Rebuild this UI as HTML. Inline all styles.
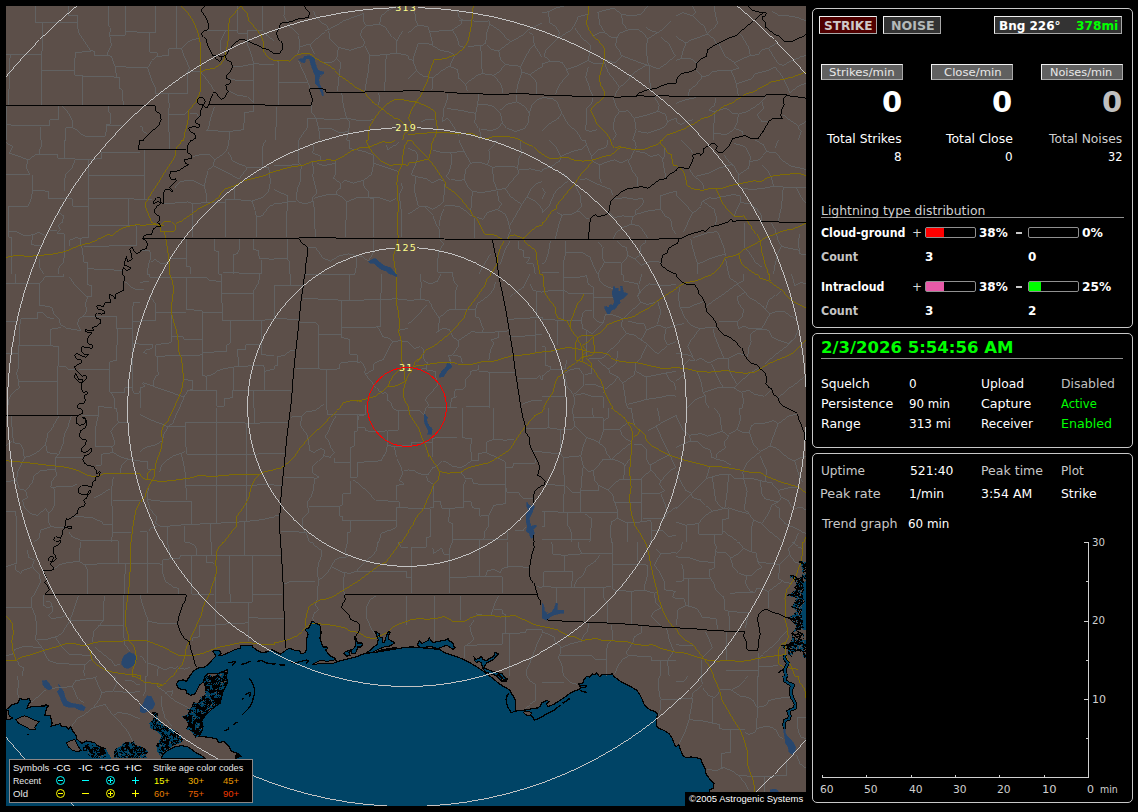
<!DOCTYPE html>
<html lang="en"><head><meta charset="utf-8"><title>Lightning Detector</title>
<style>
html,body{margin:0;padding:0;background:#000;}
body{width:1138px;height:812px;position:relative;overflow:hidden;font-family:"DejaVu Sans","Liberation Sans",sans-serif;}
.t{position:absolute;white-space:nowrap;line-height:normal;transform-origin:0 0;font-family:"DejaVu Sans","Liberation Sans",sans-serif;}
.box{position:absolute;box-sizing:border-box;border:1px solid #c8c8c8;border-radius:5px;}
.btn{position:absolute;box-sizing:border-box;border:1px solid;border-color:#f0f0f0 #a8a8a8 #a8a8a8 #f0f0f0;}
.bar{position:absolute;box-sizing:border-box;border:1px solid #909090;border-radius:2px;height:11px;width:51px;}
.bar i{position:absolute;left:0;top:0;height:9px;display:block;}
.hr{position:absolute;height:1px;background:#909090;}
#map{position:absolute;left:6px;top:6px;width:800px;height:800px;overflow:hidden;background:#5c4f49;}
#map svg{position:absolute;left:0;top:0;}
#graph{position:absolute;left:812px;top:453px;}
</style></head>
<body>
<div id="map"><svg width="800" height="800" viewBox="0 0 800 800" shape-rendering="crispEdges"><rect width="800" height="800" fill="#5c4f49"/><defs><pattern id="m1" width="40" height="40" patternUnits="userSpaceOnUse"><rect width="40" height="40" fill="#004466"/><path d="M0 0h4v1h-4zM6 0h10v1h-10zM19 0h10v1h-10zM33 0h7v1h-7zM0 1h4v1h-4zM6 1h7v1h-7zM19 1h3v1h-3zM24 1h5v1h-5zM33 1h7v1h-7zM0 2h4v1h-4zM7 2h4v1h-4zM12 2h1v1h-1zM14 2h1v1h-1zM19 2h2v1h-2zM26 2h3v1h-3zM30 2h5v1h-5zM36 2h4v1h-4zM0 3h1v1h-1zM3 3h1v1h-1zM5 3h1v1h-1zM7 3h2v1h-2zM11 3h2v1h-2zM16 3h1v1h-1zM18 3h3v1h-3zM23 3h1v1h-1zM26 3h3v1h-3zM30 3h3v1h-3zM36 3h4v1h-4zM0 4h2v1h-2zM3 4h19v1h-19zM23 4h11v1h-11zM35 4h5v1h-5zM2 5h8v1h-8zM11 5h10v1h-10zM26 5h7v1h-7zM34 5h5v1h-5zM3 6h5v1h-5zM11 6h1v1h-1zM13 6h6v1h-6zM20 6h1v1h-1zM28 6h12v1h-12zM4 7h1v1h-1zM11 7h5v1h-5zM28 7h11v1h-11zM9 8h1v1h-1zM11 8h1v1h-1zM13 8h4v1h-4zM27 8h1v1h-1zM30 8h9v1h-9zM4 9h1v1h-1zM6 9h3v1h-3zM16 9h4v1h-4zM22 9h4v1h-4zM28 9h3v1h-3zM33 9h6v1h-6zM4 10h4v1h-4zM11 10h1v1h-1zM13 10h1v1h-1zM16 10h6v1h-6zM23 10h7v1h-7zM32 10h2v1h-2zM35 10h5v1h-5zM5 11h3v1h-3zM12 11h1v1h-1zM14 11h1v1h-1zM17 11h4v1h-4zM25 11h1v1h-1zM27 11h1v1h-1zM29 11h1v1h-1zM36 11h3v1h-3zM0 12h3v1h-3zM5 12h10v1h-10zM17 12h3v1h-3zM21 12h2v1h-2zM24 12h1v1h-1zM26 12h4v1h-4zM31 12h1v1h-1zM33 12h1v1h-1zM36 12h3v1h-3zM0 13h4v1h-4zM6 13h11v1h-11zM20 13h2v1h-2zM25 13h4v1h-4zM30 13h1v1h-1zM32 13h1v1h-1zM34 13h1v1h-1zM36 13h4v1h-4zM0 14h3v1h-3zM4 14h1v1h-1zM8 14h8v1h-8zM20 14h4v1h-4zM25 14h4v1h-4zM30 14h7v1h-7zM38 14h1v1h-1zM0 15h5v1h-5zM6 15h8v1h-8zM15 15h1v1h-1zM17 15h2v1h-2zM20 15h4v1h-4zM25 15h3v1h-3zM29 15h1v1h-1zM31 15h4v1h-4zM39 15h1v1h-1zM0 16h6v1h-6zM7 16h1v1h-1zM9 16h5v1h-5zM16 16h8v1h-8zM26 16h4v1h-4zM31 16h3v1h-3zM37 16h2v1h-2zM0 17h6v1h-6zM8 17h6v1h-6zM15 17h8v1h-8zM27 17h1v1h-1zM31 17h1v1h-1zM38 17h2v1h-2zM0 18h2v1h-2zM3 18h2v1h-2zM7 18h1v1h-1zM9 18h1v1h-1zM11 18h2v1h-2zM14 18h1v1h-1zM17 18h1v1h-1zM19 18h3v1h-3zM26 18h7v1h-7zM34 18h1v1h-1zM0 19h1v1h-1zM2 19h2v1h-2zM6 19h1v1h-1zM9 19h3v1h-3zM18 19h1v1h-1zM20 19h1v1h-1zM26 19h1v1h-1zM28 19h1v1h-1zM30 19h4v1h-4zM38 19h2v1h-2zM0 20h2v1h-2zM3 20h1v1h-1zM6 20h2v1h-2zM10 20h3v1h-3zM17 20h1v1h-1zM21 20h1v1h-1zM24 20h11v1h-11zM37 20h1v1h-1zM39 20h1v1h-1zM0 21h1v1h-1zM2 21h1v1h-1zM9 21h5v1h-5zM15 21h2v1h-2zM20 21h2v1h-2zM23 21h1v1h-1zM25 21h1v1h-1zM30 21h10v1h-10zM0 22h1v1h-1zM4 22h2v1h-2zM7 22h1v1h-1zM13 22h4v1h-4zM18 22h1v1h-1zM23 22h1v1h-1zM29 22h11v1h-11zM2 23h2v1h-2zM10 23h2v1h-2zM13 23h3v1h-3zM19 23h1v1h-1zM22 23h1v1h-1zM24 23h1v1h-1zM30 23h1v1h-1zM33 23h7v1h-7zM0 24h3v1h-3zM5 24h1v1h-1zM7 24h4v1h-4zM13 24h8v1h-8zM22 24h5v1h-5zM28 24h1v1h-1zM30 24h1v1h-1zM33 24h1v1h-1zM36 24h3v1h-3zM0 25h2v1h-2zM7 25h4v1h-4zM13 25h12v1h-12zM26 25h1v1h-1zM30 25h1v1h-1zM34 25h1v1h-1zM37 25h3v1h-3zM0 26h2v1h-2zM4 26h2v1h-2zM7 26h4v1h-4zM13 26h12v1h-12zM28 26h1v1h-1zM30 26h1v1h-1zM32 26h3v1h-3zM36 26h1v1h-1zM0 27h1v1h-1zM2 27h1v1h-1zM8 27h3v1h-3zM18 27h5v1h-5zM29 27h6v1h-6zM38 27h2v1h-2zM0 28h2v1h-2zM3 28h1v1h-1zM8 28h4v1h-4zM18 28h3v1h-3zM22 28h2v1h-2zM30 28h10v1h-10zM3 29h1v1h-1zM5 29h1v1h-1zM8 29h1v1h-1zM10 29h3v1h-3zM18 29h1v1h-1zM20 29h1v1h-1zM23 29h4v1h-4zM30 29h10v1h-10zM1 30h3v1h-3zM5 30h1v1h-1zM7 30h7v1h-7zM17 30h4v1h-4zM22 30h4v1h-4zM32 30h8v1h-8zM0 31h1v1h-1zM2 31h9v1h-9zM12 31h3v1h-3zM17 31h9v1h-9zM27 31h2v1h-2zM31 31h1v1h-1zM34 31h5v1h-5zM1 32h9v1h-9zM11 32h1v1h-1zM14 32h3v1h-3zM18 32h8v1h-8zM30 32h1v1h-1zM32 32h1v1h-1zM34 32h6v1h-6zM3 33h6v1h-6zM10 33h2v1h-2zM14 33h1v1h-1zM16 33h3v1h-3zM20 33h6v1h-6zM27 33h1v1h-1zM29 33h11v1h-11zM2 34h1v1h-1zM5 34h6v1h-6zM12 34h3v1h-3zM16 34h6v1h-6zM23 34h3v1h-3zM28 34h9v1h-9zM38 34h2v1h-2zM0 35h1v1h-1zM5 35h8v1h-8zM14 35h4v1h-4zM23 35h3v1h-3zM27 35h9v1h-9zM0 36h10v1h-10zM11 36h1v1h-1zM13 36h1v1h-1zM17 36h1v1h-1zM19 36h6v1h-6zM27 36h3v1h-3zM31 36h5v1h-5zM39 36h1v1h-1zM0 37h2v1h-2zM4 37h1v1h-1zM6 37h2v1h-2zM9 37h1v1h-1zM11 37h1v1h-1zM13 37h2v1h-2zM18 37h8v1h-8zM27 37h3v1h-3zM34 37h6v1h-6zM0 38h1v1h-1zM2 38h5v1h-5zM8 38h1v1h-1zM10 38h1v1h-1zM12 38h2v1h-2zM18 38h2v1h-2zM22 38h7v1h-7zM30 38h1v1h-1zM34 38h6v1h-6zM6 39h8v1h-8zM15 39h1v1h-1zM17 39h4v1h-4zM22 39h7v1h-7zM34 39h6v1h-6z" fill="#000"/><path d="M31 1h1v1h-1zM35 2h1v1h-1zM10 3h1v1h-1zM21 5h1v1h-1zM9 6h1v1h-1zM12 6h1v1h-1zM24 6h1v1h-1zM16 7h1v1h-1zM25 7h1v1h-1zM39 7h1v1h-1zM10 8h1v1h-1zM0 9h1v1h-1zM3 9h1v1h-1zM21 9h1v1h-1zM22 10h1v1h-1zM35 11h1v1h-1zM30 12h1v1h-1zM34 12h1v1h-1zM5 14h1v1h-1zM37 14h1v1h-1zM30 15h1v1h-1zM36 17h1v1h-1zM2 18h1v1h-1zM5 18h1v1h-1zM8 18h1v1h-1zM5 19h1v1h-1zM24 19h1v1h-1zM20 20h1v1h-1zM2 22h1v1h-1zM8 22h1v1h-1zM17 22h1v1h-1zM4 23h1v1h-1zM20 23h1v1h-1zM3 24h1v1h-1zM4 25h1v1h-1zM11 25h1v1h-1zM35 25h1v1h-1zM26 26h1v1h-1zM36 27h1v1h-1zM14 28h2v1h-2zM2 29h1v1h-1zM14 29h1v1h-1zM6 30h1v1h-1zM27 30h1v1h-1zM13 32h1v1h-1zM29 32h1v1h-1zM3 35h1v1h-1zM18 35h2v1h-2zM15 36h2v1h-2zM10 37h1v1h-1zM15 38h1v1h-1zM32 38h1v1h-1z" fill="#5c4f49"/></pattern><pattern id="m2" width="40" height="40" patternUnits="userSpaceOnUse"><rect width="40" height="40" fill="#004466"/><path d="M0 0h3v1h-3zM5 0h4v1h-4zM11 0h1v1h-1zM13 0h1v1h-1zM15 0h2v1h-2zM27 0h1v1h-1zM29 0h1v1h-1zM31 0h1v1h-1zM34 0h1v1h-1zM36 0h1v1h-1zM38 0h2v1h-2zM1 1h2v1h-2zM7 1h1v1h-1zM13 1h4v1h-4zM20 1h1v1h-1zM22 1h1v1h-1zM27 1h1v1h-1zM30 1h1v1h-1zM32 1h1v1h-1zM34 1h1v1h-1zM37 1h1v1h-1zM39 1h1v1h-1zM0 2h3v1h-3zM6 2h2v1h-2zM9 2h1v1h-1zM13 2h3v1h-3zM19 2h1v1h-1zM21 2h4v1h-4zM27 2h1v1h-1zM30 2h3v1h-3zM35 2h5v1h-5zM0 3h2v1h-2zM5 3h1v1h-1zM9 3h2v1h-2zM13 3h1v1h-1zM15 3h5v1h-5zM21 3h4v1h-4zM26 3h10v1h-10zM37 3h1v1h-1zM39 3h1v1h-1zM0 4h3v1h-3zM10 4h2v1h-2zM13 4h1v1h-1zM17 4h1v1h-1zM20 4h1v1h-1zM23 4h2v1h-2zM26 4h3v1h-3zM30 4h5v1h-5zM38 4h1v1h-1zM1 5h1v1h-1zM4 5h1v1h-1zM9 5h2v1h-2zM12 5h3v1h-3zM20 5h1v1h-1zM22 5h3v1h-3zM26 5h2v1h-2zM33 5h3v1h-3zM5 6h1v1h-1zM8 6h7v1h-7zM16 6h2v1h-2zM20 6h2v1h-2zM23 6h3v1h-3zM28 6h3v1h-3zM36 6h2v1h-2zM4 7h3v1h-3zM8 7h3v1h-3zM12 7h3v1h-3zM18 7h1v1h-1zM20 7h1v1h-1zM24 7h3v1h-3zM30 7h2v1h-2zM35 7h3v1h-3zM0 8h1v1h-1zM4 8h12v1h-12zM17 8h2v1h-2zM21 8h3v1h-3zM25 8h1v1h-1zM31 8h1v1h-1zM36 8h3v1h-3zM1 9h1v1h-1zM3 9h2v1h-2zM6 9h4v1h-4zM11 9h7v1h-7zM20 9h1v1h-1zM31 9h2v1h-2zM36 9h1v1h-1zM38 9h2v1h-2zM0 10h2v1h-2zM7 10h3v1h-3zM11 10h2v1h-2zM15 10h2v1h-2zM19 10h2v1h-2zM25 10h5v1h-5zM32 10h2v1h-2zM37 10h3v1h-3zM0 11h3v1h-3zM7 11h1v1h-1zM9 11h1v1h-1zM11 11h1v1h-1zM16 11h3v1h-3zM22 11h3v1h-3zM26 11h2v1h-2zM29 11h3v1h-3zM33 11h1v1h-1zM35 11h1v1h-1zM37 11h2v1h-2zM0 12h1v1h-1zM4 12h1v1h-1zM7 12h1v1h-1zM11 12h3v1h-3zM15 12h3v1h-3zM26 12h8v1h-8zM36 12h3v1h-3zM0 13h4v1h-4zM12 13h1v1h-1zM14 13h4v1h-4zM21 13h1v1h-1zM23 13h1v1h-1zM25 13h1v1h-1zM27 13h10v1h-10zM38 13h1v1h-1zM0 14h4v1h-4zM7 14h6v1h-6zM15 14h1v1h-1zM17 14h1v1h-1zM20 14h1v1h-1zM22 14h1v1h-1zM24 14h1v1h-1zM29 14h4v1h-4zM35 14h2v1h-2zM0 15h3v1h-3zM5 15h1v1h-1zM7 15h3v1h-3zM11 15h1v1h-1zM15 15h3v1h-3zM19 15h1v1h-1zM23 15h4v1h-4zM28 15h1v1h-1zM31 15h2v1h-2zM34 15h6v1h-6zM0 16h3v1h-3zM5 16h2v1h-2zM9 16h4v1h-4zM17 16h1v1h-1zM19 16h1v1h-1zM22 16h2v1h-2zM26 16h4v1h-4zM31 16h1v1h-1zM34 16h1v1h-1zM36 16h4v1h-4zM0 17h3v1h-3zM5 17h1v1h-1zM7 17h1v1h-1zM10 17h1v1h-1zM15 17h1v1h-1zM19 17h1v1h-1zM22 17h1v1h-1zM24 17h1v1h-1zM26 17h1v1h-1zM28 17h1v1h-1zM31 17h5v1h-5zM38 17h2v1h-2zM0 18h3v1h-3zM6 18h4v1h-4zM11 18h1v1h-1zM13 18h1v1h-1zM20 18h1v1h-1zM25 18h8v1h-8zM35 18h1v1h-1zM37 18h1v1h-1zM0 19h2v1h-2zM6 19h1v1h-1zM8 19h3v1h-3zM13 19h1v1h-1zM15 19h1v1h-1zM21 19h1v1h-1zM26 19h1v1h-1zM30 19h3v1h-3zM39 19h1v1h-1zM0 20h3v1h-3zM9 20h2v1h-2zM13 20h1v1h-1zM15 20h1v1h-1zM17 20h2v1h-2zM21 20h4v1h-4zM27 20h3v1h-3zM31 20h2v1h-2zM36 20h1v1h-1zM39 20h1v1h-1zM0 21h4v1h-4zM7 21h10v1h-10zM25 21h1v1h-1zM27 21h4v1h-4zM35 21h5v1h-5zM0 22h4v1h-4zM6 22h1v1h-1zM8 22h5v1h-5zM14 22h2v1h-2zM17 22h3v1h-3zM29 22h2v1h-2zM35 22h3v1h-3zM0 23h1v1h-1zM2 23h8v1h-8zM11 23h1v1h-1zM13 23h1v1h-1zM15 23h1v1h-1zM17 23h3v1h-3zM21 23h1v1h-1zM27 23h3v1h-3zM33 23h1v1h-1zM35 23h3v1h-3zM0 24h1v1h-1zM3 24h4v1h-4zM8 24h3v1h-3zM13 24h1v1h-1zM15 24h1v1h-1zM17 24h3v1h-3zM23 24h1v1h-1zM30 24h1v1h-1zM34 24h1v1h-1zM36 24h4v1h-4zM3 25h4v1h-4zM8 25h1v1h-1zM10 25h9v1h-9zM27 25h4v1h-4zM37 25h1v1h-1zM4 26h3v1h-3zM10 26h1v1h-1zM15 26h1v1h-1zM18 26h6v1h-6zM26 26h4v1h-4zM31 26h1v1h-1zM33 26h3v1h-3zM38 26h1v1h-1zM0 27h1v1h-1zM5 27h4v1h-4zM11 27h5v1h-5zM17 27h7v1h-7zM26 27h3v1h-3zM30 27h2v1h-2zM35 27h2v1h-2zM39 27h1v1h-1zM0 28h1v1h-1zM2 28h1v1h-1zM7 28h2v1h-2zM11 28h4v1h-4zM16 28h1v1h-1zM20 28h3v1h-3zM25 28h3v1h-3zM29 28h3v1h-3zM0 29h2v1h-2zM3 29h1v1h-1zM5 29h3v1h-3zM10 29h1v1h-1zM12 29h2v1h-2zM25 29h5v1h-5zM31 29h1v1h-1zM35 29h1v1h-1zM39 29h1v1h-1zM2 30h6v1h-6zM9 30h1v1h-1zM11 30h1v1h-1zM18 30h2v1h-2zM27 30h3v1h-3zM31 30h2v1h-2zM36 30h3v1h-3zM2 31h3v1h-3zM6 31h1v1h-1zM8 31h1v1h-1zM10 31h2v1h-2zM13 31h1v1h-1zM17 31h1v1h-1zM23 31h1v1h-1zM33 31h1v1h-1zM35 31h1v1h-1zM38 31h2v1h-2zM3 32h1v1h-1zM5 32h5v1h-5zM11 32h1v1h-1zM13 32h2v1h-2zM16 32h3v1h-3zM27 32h3v1h-3zM31 32h2v1h-2zM37 32h2v1h-2zM3 33h7v1h-7zM12 33h1v1h-1zM14 33h1v1h-1zM16 33h4v1h-4zM22 33h3v1h-3zM26 33h2v1h-2zM29 33h1v1h-1zM35 33h1v1h-1zM38 33h2v1h-2zM0 34h1v1h-1zM3 34h1v1h-1zM5 34h1v1h-1zM7 34h8v1h-8zM16 34h2v1h-2zM19 34h1v1h-1zM22 34h1v1h-1zM24 34h2v1h-2zM27 34h1v1h-1zM29 34h3v1h-3zM33 34h1v1h-1zM37 34h1v1h-1zM39 34h1v1h-1zM0 35h1v1h-1zM5 35h1v1h-1zM9 35h4v1h-4zM17 35h1v1h-1zM19 35h1v1h-1zM21 35h2v1h-2zM25 35h2v1h-2zM29 35h2v1h-2zM34 35h1v1h-1zM37 35h3v1h-3zM0 36h1v1h-1zM2 36h1v1h-1zM6 36h5v1h-5zM12 36h1v1h-1zM19 36h1v1h-1zM22 36h2v1h-2zM26 36h1v1h-1zM28 36h2v1h-2zM33 36h1v1h-1zM38 36h2v1h-2zM7 37h6v1h-6zM19 37h3v1h-3zM27 37h1v1h-1zM29 37h1v1h-1zM35 37h1v1h-1zM3 38h1v1h-1zM7 38h6v1h-6zM19 38h4v1h-4zM27 38h3v1h-3zM31 38h1v1h-1zM38 38h2v1h-2zM0 39h4v1h-4zM9 39h1v1h-1zM11 39h2v1h-2zM15 39h1v1h-1zM18 39h1v1h-1zM20 39h1v1h-1zM25 39h1v1h-1zM28 39h1v1h-1zM30 39h5v1h-5zM39 39h1v1h-1z" fill="#000"/><path d="M4 0h1v1h-1zM10 0h1v1h-1zM21 0h1v1h-1zM6 1h1v1h-1zM23 1h1v1h-1zM7 3h2v1h-2zM25 5h1v1h-1zM22 6h1v1h-1zM19 7h1v1h-1zM23 7h1v1h-1zM32 8h1v1h-1zM28 9h1v1h-1zM10 10h1v1h-1zM17 10h1v1h-1zM12 11h1v1h-1zM1 12h1v1h-1zM18 13h1v1h-1zM22 13h1v1h-1zM39 13h1v1h-1zM14 14h1v1h-1zM37 14h1v1h-1zM21 15h1v1h-1zM29 15h1v1h-1zM4 16h1v1h-1zM32 16h1v1h-1zM30 17h1v1h-1zM20 19h1v1h-1zM34 19h2v1h-2zM24 21h1v1h-1zM39 22h1v1h-1zM28 24h1v1h-1zM2 26h1v1h-1zM25 26h1v1h-1zM17 28h1v1h-1zM34 28h1v1h-1zM2 29h1v1h-1zM16 29h1v1h-1zM0 30h1v1h-1zM13 30h1v1h-1zM21 30h1v1h-1zM14 31h1v1h-1zM30 31h1v1h-1zM33 32h1v1h-1zM1 33h1v1h-1zM32 34h1v1h-1zM38 34h1v1h-1zM18 35h1v1h-1zM24 35h1v1h-1zM35 35h1v1h-1zM31 36h1v1h-1zM3 37h1v1h-1zM37 37h1v1h-1zM13 38h1v1h-1zM34 38h1v1h-1zM16 39h1v1h-1zM37 39h1v1h-1z" fill="#5c4f49"/></pattern><pattern id="m3" width="40" height="40" patternUnits="userSpaceOnUse"><rect width="40" height="40" fill="#004466"/><path d="M0 0h1v1h-1zM2 0h1v1h-1zM4 0h1v1h-1zM6 0h1v1h-1zM13 0h1v1h-1zM15 0h2v1h-2zM19 0h1v1h-1zM21 0h4v1h-4zM30 0h1v1h-1zM36 0h2v1h-2zM39 0h1v1h-1zM1 1h5v1h-5zM12 1h1v1h-1zM14 1h4v1h-4zM21 1h2v1h-2zM24 1h2v1h-2zM29 1h1v1h-1zM37 1h2v1h-2zM2 2h4v1h-4zM12 2h4v1h-4zM17 2h2v1h-2zM23 2h1v1h-1zM38 2h2v1h-2zM1 3h1v1h-1zM3 3h3v1h-3zM14 3h2v1h-2zM17 3h1v1h-1zM23 3h2v1h-2zM27 3h2v1h-2zM31 3h2v1h-2zM37 3h2v1h-2zM2 4h1v1h-1zM8 4h2v1h-2zM11 4h1v1h-1zM14 4h1v1h-1zM16 4h3v1h-3zM24 4h1v1h-1zM28 4h2v1h-2zM31 4h1v1h-1zM33 4h1v1h-1zM39 4h1v1h-1zM0 5h1v1h-1zM9 5h1v1h-1zM11 5h1v1h-1zM13 5h1v1h-1zM17 5h6v1h-6zM25 5h3v1h-3zM29 5h4v1h-4zM34 5h1v1h-1zM37 5h3v1h-3zM1 6h1v1h-1zM3 6h1v1h-1zM8 6h1v1h-1zM10 6h5v1h-5zM17 6h2v1h-2zM20 6h2v1h-2zM23 6h1v1h-1zM25 6h2v1h-2zM28 6h1v1h-1zM32 6h1v1h-1zM34 6h1v1h-1zM37 6h1v1h-1zM2 7h4v1h-4zM8 7h1v1h-1zM10 7h1v1h-1zM13 7h3v1h-3zM20 7h3v1h-3zM26 7h1v1h-1zM28 7h2v1h-2zM33 7h2v1h-2zM3 8h1v1h-1zM6 8h1v1h-1zM9 8h1v1h-1zM12 8h2v1h-2zM16 8h3v1h-3zM20 8h1v1h-1zM29 8h1v1h-1zM33 8h1v1h-1zM3 9h1v1h-1zM5 9h1v1h-1zM8 9h1v1h-1zM10 9h1v1h-1zM12 9h1v1h-1zM15 9h2v1h-2zM18 9h1v1h-1zM20 9h2v1h-2zM34 9h2v1h-2zM39 9h1v1h-1zM1 10h1v1h-1zM4 10h1v1h-1zM6 10h1v1h-1zM9 10h3v1h-3zM13 10h1v1h-1zM15 10h2v1h-2zM20 10h2v1h-2zM25 10h1v1h-1zM30 10h3v1h-3zM35 10h1v1h-1zM39 10h1v1h-1zM4 11h2v1h-2zM7 11h1v1h-1zM10 11h2v1h-2zM14 11h1v1h-1zM16 11h1v1h-1zM18 11h2v1h-2zM21 11h1v1h-1zM23 11h1v1h-1zM27 11h1v1h-1zM29 11h8v1h-8zM38 11h1v1h-1zM3 12h1v1h-1zM5 12h2v1h-2zM8 12h4v1h-4zM13 12h2v1h-2zM16 12h2v1h-2zM19 12h1v1h-1zM23 12h1v1h-1zM27 12h2v1h-2zM30 12h1v1h-1zM32 12h2v1h-2zM36 12h4v1h-4zM0 13h1v1h-1zM4 13h5v1h-5zM11 13h1v1h-1zM13 13h3v1h-3zM17 13h6v1h-6zM24 13h1v1h-1zM26 13h7v1h-7zM34 13h1v1h-1zM37 13h1v1h-1zM8 14h3v1h-3zM13 14h2v1h-2zM20 14h3v1h-3zM24 14h2v1h-2zM27 14h1v1h-1zM29 14h1v1h-1zM32 14h6v1h-6zM39 14h1v1h-1zM0 15h1v1h-1zM2 15h1v1h-1zM7 15h1v1h-1zM9 15h3v1h-3zM18 15h9v1h-9zM29 15h1v1h-1zM31 15h3v1h-3zM35 15h3v1h-3zM39 15h1v1h-1zM0 16h1v1h-1zM3 16h2v1h-2zM7 16h3v1h-3zM11 16h1v1h-1zM16 16h1v1h-1zM18 16h2v1h-2zM26 16h4v1h-4zM32 16h1v1h-1zM36 16h2v1h-2zM0 17h1v1h-1zM2 17h3v1h-3zM9 17h3v1h-3zM17 17h2v1h-2zM25 17h1v1h-1zM27 17h6v1h-6zM2 18h1v1h-1zM4 18h1v1h-1zM6 18h1v1h-1zM8 18h2v1h-2zM13 18h1v1h-1zM17 18h3v1h-3zM26 18h3v1h-3zM31 18h1v1h-1zM33 18h4v1h-4zM2 19h2v1h-2zM13 19h1v1h-1zM17 19h2v1h-2zM22 19h1v1h-1zM24 19h5v1h-5zM30 19h3v1h-3zM34 19h1v1h-1zM38 19h1v1h-1zM0 20h1v1h-1zM8 20h1v1h-1zM10 20h4v1h-4zM16 20h2v1h-2zM26 20h2v1h-2zM29 20h4v1h-4zM34 20h1v1h-1zM36 20h1v1h-1zM38 20h1v1h-1zM0 21h4v1h-4zM10 21h1v1h-1zM13 21h1v1h-1zM16 21h1v1h-1zM22 21h1v1h-1zM27 21h2v1h-2zM31 21h1v1h-1zM33 21h7v1h-7zM0 22h3v1h-3zM7 22h2v1h-2zM12 22h1v1h-1zM14 22h1v1h-1zM16 22h1v1h-1zM22 22h1v1h-1zM24 22h2v1h-2zM29 22h6v1h-6zM38 22h1v1h-1zM1 23h3v1h-3zM6 23h1v1h-1zM8 23h1v1h-1zM10 23h8v1h-8zM22 23h1v1h-1zM24 23h1v1h-1zM30 23h5v1h-5zM37 23h2v1h-2zM1 24h4v1h-4zM7 24h2v1h-2zM13 24h4v1h-4zM19 24h3v1h-3zM24 24h4v1h-4zM30 24h2v1h-2zM36 24h2v1h-2zM2 25h1v1h-1zM4 25h1v1h-1zM6 25h1v1h-1zM22 25h1v1h-1zM24 25h4v1h-4zM29 25h3v1h-3zM33 25h1v1h-1zM36 25h1v1h-1zM38 25h1v1h-1zM0 26h1v1h-1zM2 26h2v1h-2zM11 26h1v1h-1zM13 26h1v1h-1zM15 26h1v1h-1zM17 26h1v1h-1zM21 26h2v1h-2zM25 26h2v1h-2zM28 26h5v1h-5zM35 26h5v1h-5zM1 27h2v1h-2zM4 27h5v1h-5zM10 27h1v1h-1zM14 27h5v1h-5zM20 27h4v1h-4zM27 27h4v1h-4zM32 27h2v1h-2zM39 27h1v1h-1zM1 28h2v1h-2zM4 28h2v1h-2zM7 28h3v1h-3zM13 28h1v1h-1zM16 28h3v1h-3zM25 28h3v1h-3zM29 28h5v1h-5zM35 28h1v1h-1zM38 28h1v1h-1zM2 29h1v1h-1zM5 29h1v1h-1zM8 29h1v1h-1zM14 29h3v1h-3zM18 29h2v1h-2zM22 29h1v1h-1zM26 29h1v1h-1zM28 29h2v1h-2zM36 29h3v1h-3zM1 30h1v1h-1zM5 30h5v1h-5zM16 30h2v1h-2zM24 30h1v1h-1zM28 30h1v1h-1zM32 30h1v1h-1zM36 30h1v1h-1zM38 30h1v1h-1zM0 31h3v1h-3zM5 31h1v1h-1zM7 31h1v1h-1zM9 31h3v1h-3zM14 31h1v1h-1zM18 31h2v1h-2zM23 31h2v1h-2zM26 31h5v1h-5zM33 31h4v1h-4zM1 32h2v1h-2zM5 32h2v1h-2zM8 32h3v1h-3zM14 32h1v1h-1zM17 32h6v1h-6zM24 32h1v1h-1zM28 32h1v1h-1zM36 32h2v1h-2zM39 32h1v1h-1zM2 33h4v1h-4zM10 33h3v1h-3zM17 33h3v1h-3zM22 33h3v1h-3zM28 33h1v1h-1zM32 33h4v1h-4zM37 33h1v1h-1zM2 34h4v1h-4zM7 34h4v1h-4zM12 34h1v1h-1zM15 34h2v1h-2zM23 34h1v1h-1zM25 34h1v1h-1zM28 34h2v1h-2zM31 34h2v1h-2zM35 34h1v1h-1zM1 35h1v1h-1zM4 35h2v1h-2zM7 35h2v1h-2zM15 35h1v1h-1zM22 35h3v1h-3zM28 35h1v1h-1zM30 35h4v1h-4zM38 35h2v1h-2zM4 36h5v1h-5zM17 36h2v1h-2zM21 36h12v1h-12zM34 36h3v1h-3zM1 37h2v1h-2zM4 37h1v1h-1zM8 37h1v1h-1zM11 37h2v1h-2zM14 37h1v1h-1zM17 37h11v1h-11zM29 37h3v1h-3zM34 37h2v1h-2zM39 37h1v1h-1zM0 38h2v1h-2zM4 38h2v1h-2zM8 38h2v1h-2zM14 38h1v1h-1zM17 38h1v1h-1zM19 38h9v1h-9zM31 38h4v1h-4zM39 38h1v1h-1zM1 39h3v1h-3zM5 39h1v1h-1zM8 39h1v1h-1zM11 39h1v1h-1zM15 39h1v1h-1zM17 39h1v1h-1zM19 39h1v1h-1zM21 39h3v1h-3zM26 39h1v1h-1zM29 39h2v1h-2zM37 39h3v1h-3z" fill="#000"/><path d="M10 0h2v1h-2zM18 0h1v1h-1zM20 0h1v1h-1zM26 0h1v1h-1zM33 0h2v1h-2zM8 1h1v1h-1zM13 1h1v1h-1zM20 1h1v1h-1zM30 1h1v1h-1zM33 1h1v1h-1zM35 1h1v1h-1zM39 1h1v1h-1zM1 2h1v1h-1zM10 2h2v1h-2zM16 2h1v1h-1zM20 2h1v1h-1zM22 2h1v1h-1zM24 2h2v1h-2zM30 2h1v1h-1zM33 2h1v1h-1zM2 3h1v1h-1zM6 3h2v1h-2zM9 3h1v1h-1zM18 3h2v1h-2zM21 3h1v1h-1zM26 3h1v1h-1zM30 3h1v1h-1zM34 3h1v1h-1zM36 3h1v1h-1zM39 3h1v1h-1zM1 4h1v1h-1zM6 4h2v1h-2zM13 4h1v1h-1zM15 4h1v1h-1zM34 4h2v1h-2zM38 4h1v1h-1zM1 5h3v1h-3zM5 5h2v1h-2zM8 5h1v1h-1zM10 5h1v1h-1zM12 5h1v1h-1zM14 5h2v1h-2zM24 5h1v1h-1zM33 5h1v1h-1zM35 5h1v1h-1zM4 6h1v1h-1zM9 6h1v1h-1zM19 6h1v1h-1zM22 6h1v1h-1zM24 6h1v1h-1zM27 6h1v1h-1zM33 6h1v1h-1zM36 6h1v1h-1zM38 6h2v1h-2zM6 7h1v1h-1zM9 7h1v1h-1zM17 7h1v1h-1zM23 7h1v1h-1zM27 7h1v1h-1zM30 7h1v1h-1zM32 7h1v1h-1zM36 7h2v1h-2zM39 7h1v1h-1zM1 8h1v1h-1zM8 8h1v1h-1zM14 8h1v1h-1zM23 8h1v1h-1zM25 8h1v1h-1zM27 8h1v1h-1zM32 8h1v1h-1zM37 8h2v1h-2zM1 9h1v1h-1zM6 9h1v1h-1zM11 9h1v1h-1zM13 9h1v1h-1zM22 9h1v1h-1zM25 9h1v1h-1zM3 10h1v1h-1zM5 10h1v1h-1zM7 10h1v1h-1zM17 10h2v1h-2zM33 10h1v1h-1zM2 11h1v1h-1zM25 11h1v1h-1zM28 11h1v1h-1zM37 11h1v1h-1zM1 12h1v1h-1zM21 12h1v1h-1zM24 12h3v1h-3zM31 12h1v1h-1zM35 12h1v1h-1zM16 13h1v1h-1zM23 13h1v1h-1zM33 13h1v1h-1zM36 13h1v1h-1zM38 13h1v1h-1zM1 14h1v1h-1zM11 14h1v1h-1zM17 14h1v1h-1zM19 14h1v1h-1zM23 14h1v1h-1zM26 14h1v1h-1zM28 14h1v1h-1zM30 14h1v1h-1zM6 15h1v1h-1zM13 15h1v1h-1zM16 15h2v1h-2zM28 15h1v1h-1zM30 15h1v1h-1zM2 16h1v1h-1zM5 16h1v1h-1zM10 16h1v1h-1zM14 16h1v1h-1zM17 16h1v1h-1zM20 16h4v1h-4zM31 16h1v1h-1zM1 17h1v1h-1zM8 17h1v1h-1zM14 17h1v1h-1zM22 17h1v1h-1zM34 17h1v1h-1zM38 17h1v1h-1zM5 18h1v1h-1zM7 18h1v1h-1zM10 18h1v1h-1zM12 18h1v1h-1zM14 18h1v1h-1zM20 18h1v1h-1zM24 18h1v1h-1zM5 19h2v1h-2zM9 19h1v1h-1zM14 19h1v1h-1zM16 19h1v1h-1zM29 19h1v1h-1zM35 19h1v1h-1zM3 20h1v1h-1zM23 20h3v1h-3zM28 20h1v1h-1zM4 21h3v1h-3zM15 21h1v1h-1zM18 21h2v1h-2zM21 21h1v1h-1zM25 21h1v1h-1zM6 22h1v1h-1zM9 22h2v1h-2zM13 22h1v1h-1zM15 22h1v1h-1zM18 22h1v1h-1zM26 22h1v1h-1zM35 22h1v1h-1zM9 23h1v1h-1zM27 23h1v1h-1zM35 23h2v1h-2zM39 23h1v1h-1zM0 24h1v1h-1zM6 24h1v1h-1zM9 24h1v1h-1zM11 24h1v1h-1zM18 24h1v1h-1zM32 24h1v1h-1zM35 24h1v1h-1zM39 24h1v1h-1zM3 25h1v1h-1zM13 25h5v1h-5zM21 25h1v1h-1zM23 25h1v1h-1zM34 25h2v1h-2zM37 25h1v1h-1zM39 25h1v1h-1zM1 26h1v1h-1zM10 26h1v1h-1zM14 26h1v1h-1zM16 26h1v1h-1zM18 26h1v1h-1zM20 26h1v1h-1zM27 26h1v1h-1zM0 27h1v1h-1zM9 27h1v1h-1zM12 27h2v1h-2zM19 27h1v1h-1zM24 27h1v1h-1zM31 27h1v1h-1zM34 27h1v1h-1zM37 27h1v1h-1zM3 28h1v1h-1zM11 28h2v1h-2zM21 28h3v1h-3zM34 28h1v1h-1zM36 28h1v1h-1zM0 29h1v1h-1zM10 29h2v1h-2zM21 29h1v1h-1zM24 29h1v1h-1zM34 29h1v1h-1zM0 30h1v1h-1zM12 30h1v1h-1zM15 30h1v1h-1zM21 30h3v1h-3zM27 30h1v1h-1zM31 30h1v1h-1zM33 30h1v1h-1zM35 30h1v1h-1zM39 30h1v1h-1zM13 31h1v1h-1zM21 31h1v1h-1zM37 31h1v1h-1zM0 32h1v1h-1zM7 32h1v1h-1zM11 32h1v1h-1zM13 32h1v1h-1zM16 32h1v1h-1zM29 32h1v1h-1zM32 32h1v1h-1zM1 33h1v1h-1zM7 33h1v1h-1zM14 33h1v1h-1zM21 33h1v1h-1zM29 33h1v1h-1zM0 34h1v1h-1zM11 34h1v1h-1zM13 34h2v1h-2zM17 34h1v1h-1zM21 34h2v1h-2zM24 34h1v1h-1zM26 34h1v1h-1zM33 34h1v1h-1zM37 34h1v1h-1zM10 35h1v1h-1zM13 35h1v1h-1zM16 35h1v1h-1zM18 35h4v1h-4zM29 35h1v1h-1zM37 35h1v1h-1zM1 36h3v1h-3zM13 36h1v1h-1zM37 36h1v1h-1zM6 37h2v1h-2zM15 37h1v1h-1zM36 37h2v1h-2zM3 38h1v1h-1zM7 38h1v1h-1zM16 38h1v1h-1zM0 39h1v1h-1zM4 39h1v1h-1zM10 39h1v1h-1zM14 39h1v1h-1zM16 39h1v1h-1zM24 39h1v1h-1zM32 39h1v1h-1zM34 39h2v1h-2z" fill="#5c4f49"/></pattern></defs><path d="M229.0 752.7L235.1 750.2L232.7 747.7L225.3 745.3L222.8 740.4L220.4 737.9L217.9 735.4L213.0 736.7L210.5 733.0L205.6 731.7L200.7 731.1L197.0 730.5L193.3 730.5L195.7 725.6L197.0 720.7L195.7 715.7L198.2 710.8L201.9 707.1L205.6 703.4L210.5 699.7L214.2 697.3L215.4 692.3L216.7 686.2L219.1 681.2L221.6 676.3L220.4 671.4L221.6 664.0L221.6 663.5L212.8 667.2L202.4 667.2L198.7 670.9L197.3 676.1L193.6 679.0L191.3 683.5L189.1 687.9L184.7 689.4L181.0 687.2L179.5 683.5L175.1 683.5L171.4 681.2L170.7 677.5L172.9 674.6L177.3 673.9L180.3 675.3L183.2 670.9L187.6 665.0L192.1 662.0L198.0 661.3L202.4 658.3L206.1 653.9L209.8 650.2L208.3 647.3L206.9 645.3L209.8 644.3L213.5 645.0L215.0 647.3L212.8 649.5L215.7 649.5L223.1 646.5L229.0 643.6L234.2 642.1L234.2 639.4L246.0 639.4L246.8 641.3L251.2 644.3L255.6 646.5L261.5 645.8L266.0 643.6L270.4 645.8L274.8 648.0L277.8 645.8L280.7 643.6L284.0 642.1L286.2 643.4L289.9 644.6L293.6 644.6L294.8 647.7L297.9 647.1L299.7 645.9L300.9 640.9L300.3 633.6L302.2 628.6L300.9 625.6L299.1 624.3L300.3 622.5L302.8 621.9L304.6 618.8L305.9 615.7L307.7 615.7L309.6 617.5L313.3 618.5L314.5 621.2L315.1 627.4L313.9 632.3L315.7 637.3L317.0 640.9L320.7 640.9L321.3 642.8L319.4 644.0L321.9 647.1L325.6 650.8L328.7 651.4L329.3 653.3L331.1 655.7L337.9 653.9L342.8 652.6L350.2 650.8L356.4 648.3L364.0 646.5L368.5 646.5L375.9 645.3L383.3 644.0L390.7 642.8L398.0 641.6L405.4 640.9L412.8 641.6L420.2 642.2L427.6 642.8L434.0 643.7L438.5 646.6L445.9 649.1L453.3 651.6L459.4 654.6L465.6 657.7L471.7 661.4L477.9 665.7L482.8 669.4L487.7 673.1L492.7 677.4L497.6 680.5L504.0 684.2L504.8 686.5L507.3 690.2L509.1 693.9L509.7 698.2L509.1 703.1L509.7 705.0L515.9 704.3L522.0 703.7L527.0 702.5L531.9 701.9L534.3 700.0L535.6 697.0L538.0 695.7L541.1 694.5L543.0 695.7L540.5 698.2L542.3 700.7L547.9 698.2L552.8 695.1L557.7 692.0L562.7 688.3L567.6 685.3L571.3 684.0L574.0 683.2L574.3 680.9L572.5 677.9L576.8 677.3L578.0 673.6L580.5 670.5L583.6 671.1L586.0 668.0L588.5 668.6L590.9 666.8L593.4 670.5L596.5 668.6L600.8 668.6L606.3 668.0L608.2 670.5L611.9 673.6L615.6 676.0L620.5 678.5L625.4 680.9L630.4 684.0L633.4 687.7L635.9 692.6L637.7 697.6L640.2 700.7L643.9 703.7L648.8 705.6L651.3 708.0L650.7 713.0L650.1 717.9L651.3 721.6L654.0 722.8L658.1 724.5L663.1 727.8L666.4 732.7L668.8 739.3L670.0 741.0L672.5 738.5L674.1 742.6L676.6 749.2L679.9 751.7L684.9 750.9L689.8 751.7L694.8 752.5L696.4 757.5L698.9 762.4L700.5 769.0L704.7 774.0L708.0 777.3L707.1 782.2L703.0 783.9L704.7 787.2L706.0 800.0L229.0 800.0ZM0.0 703.6L2.5 702.3L6.2 698.6L12.3 696.8L13.5 692.5L18.5 693.7L23.4 692.5L24.6 696.2L22.2 698.6L20.9 702.3L25.9 700.5L39.4 699.9L40.0 698.6L42.5 699.9L40.6 701.7L38.8 709.7L44.3 709.7L46.2 717.1L45.0 720.2L49.3 719.0L54.2 717.7L55.4 720.2L60.3 720.8L62.8 723.3L64.7 720.8L67.1 725.7L70.2 729.4L70.8 733.1L73.9 735.6L75.7 737.4L80.0 735.0L83.7 735.6L88.7 736.8L91.1 739.3L94.8 741.1L100.0 743.0L106.0 754.0L234.0 794.0L234.0 800.0L0.0 800.0ZM155.1 752.1L157.5 747.7L162.5 744.0L168.6 741.0L174.8 739.7L180.9 740.4L184.6 742.8L189.6 746.5L194.5 749.0L199.4 752.4L155.1 752.7ZM349.0 630.5L350.2 634.2L352.1 637.3L355.1 636.6L357.0 639.1L354.5 640.9L351.4 640.9L350.8 644.6L349.0 647.7L345.3 647.1L345.3 644.6L342.8 646.5L344.0 649.6L340.4 650.2L337.9 647.1L339.1 645.9L342.8 644.6L346.5 643.4L349.0 640.9L349.6 637.3L349.0 633.6ZM369.1 625.6L370.9 626.2L373.4 628.0L372.8 629.9L374.6 631.7L376.5 631.7L376.5 636.6L378.3 636.6L379.6 632.3L380.8 628.6L382.6 625.6L384.5 626.2L382.6 629.2L382.6 632.9L385.7 635.4L388.8 636.6L385.7 639.1L382.6 640.3L378.3 640.9L374.6 642.2L370.9 644.0L367.3 645.9L363.6 647.1L360.5 647.1L364.2 644.0L366.6 642.2L368.5 640.3L370.9 638.5L372.2 633.6L370.9 629.9ZM370.9 645.3L378.3 643.4L385.7 642.2L390.7 641.6L390.9 642.4L385.7 643.2L378.3 644.4L371.6 646.1ZM411.4 638.6L413.2 634.9L416.3 637.4L420.0 635.6L422.5 634.3L423.1 631.9L424.9 634.3L426.8 636.8L431.1 635.6L434.8 634.9L439.1 634.3L442.2 632.5L443.4 635.6L446.5 636.2L447.7 639.9L449.0 641.7L447.1 643.6L444.6 641.7L440.9 639.2L437.3 640.5L434.2 641.7L432.3 642.9L428.6 641.7L424.9 640.5L420.0 641.1L416.3 641.7L413.9 641.1ZM468.0 650.9L469.9 653.4L473.0 652.2L475.4 650.3L476.7 653.4L480.4 654.6L484.0 652.2L487.7 650.3L489.0 646.6L492.7 647.9L490.2 650.3L487.7 653.4L484.0 655.3L481.0 656.5L479.1 659.6L477.9 662.0L481.6 663.3L484.0 664.5L487.7 665.7L492.7 667.0L495.1 670.7L497.6 673.7L501.3 673.1L500.1 675.6L496.4 675.6L492.7 671.9L490.2 669.4L485.3 668.2L482.8 667.0L479.1 665.7L476.7 662.0L475.4 657.1L473.0 655.3L470.5 656.5L468.7 654.6ZM491.2 668.6L494.9 671.1L495.6 674.2L498.6 674.8L501.7 672.9L499.2 671.7L496.2 668.0L493.7 667.4ZM573.7 679.1L579.9 679.1L580.5 680.9L574.9 681.6ZM799.9 574.6L797.7 577.1L798.3 583.3L795.9 588.2L797.1 591.9L799.0 595.6L796.5 600.5L795.9 607.9L796.5 614.0L797.7 620.2L797.1 627.6L796.5 634.0L799.9 634.0ZM796.9 624.0L799.9 624.0L799.9 638.7L798.2 637.8L797.4 634.3L797.8 629.2ZM796.5 569.7L797.7 570.9L797.1 574.6L795.9 573.4Z" fill="#004466"/><path d="M198.2 671.4L201.9 668.9L208.0 670.2L213.0 667.7L217.9 665.2L221.6 666.5L220.4 671.4L221.6 676.3L219.1 681.2L216.7 686.2L215.4 692.3L214.2 697.3L210.5 699.7L205.6 703.4L201.9 707.1L198.2 710.8L195.7 715.7L197.0 720.7L195.7 725.6L193.3 730.5L189.6 731.7L187.1 728.0L183.4 724.3L179.7 723.1L182.2 719.4L180.9 715.7L177.3 712.0L176.0 710.2L180.9 709.0L183.4 704.6L180.9 703.4L185.9 700.9L187.1 696.0L192.0 697.3L194.5 691.1L198.2 689.9L199.4 684.9L198.2 678.8L197.0 675.7Z" fill="url(#m1)"/><path d="M144.0 715.7L147.7 717.0L151.4 719.4L156.3 721.9L160.0 720.7L163.7 721.9L168.6 724.3L172.3 726.8L174.8 730.5L177.3 734.2L174.8 736.7L168.6 739.1L162.5 742.8L157.5 746.5L153.9 750.2L151.4 745.3L150.2 739.1L152.6 735.4L155.1 730.5L153.9 725.6L148.9 724.3L145.2 721.9ZM107.5 751.6L108.8 743.0L113.7 740.5L116.2 738.0L121.1 735.6L124.8 736.8L127.3 735.0L129.7 739.3L134.6 740.5L139.6 743.0L142.0 746.0L139.6 749.1L140.8 751.6ZM76.4 741.1L81.3 738.0L86.2 739.3L91.1 741.1L96.1 743.0L100.0 744.8L100.0 751.6L86.2 751.6L81.3 747.9L77.6 745.4ZM143.3 717.1L145.7 715.3L148.2 710.9L145.7 706.0L148.2 705.4L151.9 707.3L151.3 710.9L153.1 714.6L158.0 719.6L163.0 722.0L160.5 725.7L158.0 730.7L155.6 735.6L153.1 738.0L151.9 743.0L150.7 738.0L154.3 735.6L155.6 730.7L153.1 727.0L149.4 724.5L144.5 722.0Z" fill="url(#m2)"/><path d="M794.6 554.9L799.9 556.2L799.9 574.6L797.1 570.9L790.9 572.2L784.8 569.7L783.6 570.9L789.7 575.9L790.9 583.3L781.1 589.4L790.9 591.9L786.0 600.5L790.9 605.4L782.3 611.6L790.9 620.2L786.0 627.6L790.9 634.0L796.5 634.0L797.1 627.6L797.7 620.2L796.5 614.0L795.9 607.9L796.5 600.5L799.0 595.6L797.1 591.9L795.9 588.2L798.3 583.3L797.7 577.1ZM775.4 639.1L778.8 638.7L782.3 637.8L785.7 634.3L785.7 626.6L792.6 624.0L796.9 624.0L797.8 629.2L797.4 634.3L798.2 637.8L799.9 638.7L799.9 652.4L797.8 651.6L796.1 646.4L792.6 644.7L789.2 645.6L785.7 649.9L782.3 649.0L782.3 643.8L778.8 643.0Z" fill="url(#m3)"/><path d="M0.0 704.8L2.2 704.8L3.1 709.7L6.8 711.9L3.7 713.4L0.0 713.7ZM9.9 713.4L13.5 711.6L18.5 709.7L24.6 712.2L29.6 714.6L33.3 715.9L30.8 718.3L28.9 721.4L29.6 723.3L24.6 723.9L20.9 721.4L16.0 719.0L12.3 717.1ZM60.3 736.8L65.3 734.3L69.0 733.7L70.8 738.0L72.7 741.1L75.1 744.2L71.4 746.0L66.5 744.2L62.8 741.1ZM306.5 658.2L310.8 656.3L313.3 654.7L321.9 655.2L326.8 654.5L329.3 653.3L331.5 655.7L328.0 657.0L320.7 657.2L313.3 657.9ZM517.1 706.2L520.8 705.6L525.7 706.2L524.5 709.3L522.0 709.9L519.0 708.0Z" fill="#5c4f49" stroke="#000" stroke-width="1"/><path d="M292.8 53.6L295.2 56.1L298.5 56.9L300.2 52.8L303.5 52.8L305.1 59.4L307.6 66.0L309.3 69.3L309.3 77.6L312.6 80.9L315.0 85.8L316.7 90.4L317.5 89.1L316.7 84.2L313.4 77.6L312.6 72.6L315.0 68.5L317.5 67.7L317.5 65.7L314.2 65.2L311.7 63.5L309.3 57.8L308.4 52.0L305.1 50.3L301.8 49.5L298.5 50.3L296.9 52.8L293.6 52.8ZM362.4 255.8L367.0 252.8L370.0 252.5L373.6 256.1L377.7 259.4L383.5 261.4L386.8 264.4L389.8 268.0L383.5 268.0L380.2 265.2L375.3 263.5L371.1 260.2L367.8 256.9L364.5 257.4ZM386.0 268.0L390.9 268.0L390.9 270.5L388.5 270.0ZM607.8 279.6L609.4 282.9L611.9 282.0L612.7 285.3L615.2 284.5L614.4 280.4L616.0 280.4L617.7 286.2L621.8 287.8L619.3 290.3L616.9 292.8L613.6 294.4L614.4 296.9L611.1 299.4L609.4 302.7L605.3 304.3L603.7 307.6L601.2 307.6L599.5 304.3L598.4 301.0L600.4 300.2L602.0 301.8L603.7 298.5L607.0 299.4L608.6 295.2L607.0 291.1L606.1 287.0L607.0 283.7ZM520.8 496.1L523.3 499.4L526.6 501.0L527.4 496.1L528.2 501.0L525.8 507.6L523.3 512.6L524.1 517.5L525.8 520.0L529.9 519.2L530.7 520.0L527.4 523.3L528.2 527.4L527.4 531.5L524.9 532.4L523.3 527.4L520.0 524.9L521.6 520.8L520.0 515.9L520.0 509.3L522.5 504.3L520.5 500.2ZM123.8 646.2L127.9 648.2L130.4 651.5L129.5 656.5L126.2 660.6L122.1 662.7L118.0 661.4L115.5 658.1L116.3 653.2L118.8 649.0ZM536.0 597.1L537.7 598.7L538.5 605.3L541.8 607.8L545.9 606.1L548.4 602.0L550.0 597.1L551.7 597.9L550.9 603.7L553.3 604.5L557.5 604.0L557.5 607.0L552.5 607.8L549.2 608.6L544.3 611.1L541.0 614.4L536.0 611.9ZM36.3 675.0L40.4 674.1L43.7 678.3L46.2 682.4L43.7 684.0L39.6 682.4L37.1 679.1ZM52.8 678.3L55.3 682.4L57.8 685.7L58.6 689.8L61.1 694.8L65.2 697.2L71.0 698.1L75.9 698.9L79.2 701.4L77.6 704.7L72.6 703.8L68.5 701.4L62.7 701.4L57.8 699.7L55.3 694.8L53.6 689.8L51.2 685.7L53.6 683.2ZM134.0 700.5L137.3 698.1L139.0 693.1L141.4 689.8L145.6 690.6L147.2 694.8L148.9 698.1L147.2 702.2L143.9 703.8L140.6 705.5L137.3 707.1L134.0 705.5ZM778.9 722.8L779.7 727.8L782.2 731.1L785.5 734.4L788.0 737.7L789.6 741.0L788.8 745.9L785.5 748.4L783.0 745.9L782.2 741.0L779.7 737.7L778.9 732.7L778.1 727.8L777.6 722.8ZM764.1 783.9L769.0 783.0L772.3 784.7L772.3 786.3L764.1 786.3ZM441.5 357.2L444.6 358.4L445.8 360.9L443.4 363.3L440.9 365.2L439.1 368.2L437.8 370.7L432.9 371.3L434.1 367.6L436.0 364.5L438.4 362.7L440.3 360.2ZM418.1 407.0L420.0 410.1L421.8 411.3L420.6 413.8L421.8 417.5L424.9 421.2L426.1 423.7L425.5 428.0L421.8 428.6L422.4 424.9L420.6 421.2L418.7 416.9L418.1 412.6Z" fill="#28476e" stroke="#28476e" stroke-width="0.6"/><path d="M29.4 0.0L29.4 16.2L71.0 16.2L71.0 9.1L62.4 9.1L62.4 0.0M36.6 16.2L36.6 39.6L35.5 49.5L35.5 99.0M0.0 48.7L35.5 48.7M4.1 48.7L2.5 99.0M71.0 16.2L72.6 26.4L76.7 33.0L80.9 38.8L84.5 44.6L88.3 45.4L88.3 49.2L101.5 49.2M84.5 45.4L69.3 46.5L68.5 57.8L68.5 69.3L76.7 70.1L99.0 70.6L113.9 71.3M35.5 64.4L68.5 64.4M76.7 70.1L76.7 99.0M102.3 0.0L102.3 19.8L104.3 21.5L103.6 29.4L119.1 29.4L119.1 0.0M103.6 29.4L105.6 39.6L102.3 44.6L101.5 49.2L105.6 51.2L108.1 57.8L109.7 61.1L110.2 71.0M119.1 25.6L134.0 26.1M109.7 60.7L134.0 61.4M113.9 71.3L113.9 82.5L116.3 84.2L116.3 90.4L117.5 99.0M0.0 118.8L18.2 119.6L43.7 119.6L43.7 113.5L52.5 113.5L52.5 99.8M34.7 121.3L34.7 134.0M56.1 100.3L59.4 103.1L63.5 108.9L66.0 113.9L66.0 121.3L59.7 122.1L59.7 134.0M66.0 121.3L71.0 123.8L75.9 128.7L80.0 130.4L99.0 130.4M102.3 99.8L102.3 105.6L104.3 107.3L104.3 118.0L100.3 118.8L99.8 130.4M100.3 119.1L115.5 119.1M0.3 99.8L0.3 134.0M134.0 26.1L149.7 26.1L149.7 0.0M143.9 26.4L143.9 46.2L151.3 46.5L151.3 50.3L162.9 49.5L162.9 42.6L175.3 42.6M170.3 0.0L170.3 42.6M175.3 42.6L181.9 36.3L188.5 33.0L193.4 32.2M151.3 50.3L145.6 54.5L141.4 61.1L134.0 61.4M141.4 61.1L145.6 74.3L149.7 82.5L148.9 87.5L162.1 87.5L181.9 87.1L181.9 65.2L194.7 65.2M175.3 42.6L178.6 51.2L183.5 61.9L181.9 65.2M162.1 87.5L163.4 99.0L162.1 108.1L163.4 134.0M134.0 120.5L136.5 121.3L137.0 125.4L140.6 127.1M162.1 108.1L177.7 108.9L181.9 105.6M197.5 24.8L219.8 24.8L231.4 24.8L231.4 0.0M219.8 24.8L214.9 34.7L214.9 44.6L218.2 47.9M231.4 24.8L232.2 27.2L241.3 27.2L241.3 24.8L256.9 24.8L256.9 0.0M241.3 27.2L241.3 38.0L244.6 46.2L247.9 57.8L247.9 97.4M226.4 61.1L236.3 60.2L247.9 57.8L268.0 58.6M223.1 72.6L229.7 74.3L247.9 74.3M194.7 66.0L200.0 72.6L205.0 79.2L208.3 85.0M222.8 85.0L231.4 89.1L241.3 90.8L246.2 95.7M247.9 99.0L247.9 105.6L238.8 106.4L238.0 115.5L237.1 123.8L223.1 125.4L223.1 134.0M208.3 100.7L205.0 110.6L202.5 122.1L200.0 124.6L223.1 125.4M183.5 107.3L190.1 107.3L194.2 112.2M268.0 34.7L261.1 29.7L256.9 24.8M278.7 0.0L277.9 9.9L284.5 21.5L292.8 29.7L293.6 41.3L291.9 47.9M307.6 5.0L309.3 9.9L314.2 15.7L320.8 19.8L322.5 23.1L319.2 24.8L303.5 38.0L292.8 41.3M303.5 38.0L308.4 47.9M357.1 6.6L355.5 8.3L337.3 14.9L322.5 23.1M322.5 24.8L324.1 33.0L332.4 41.3L343.9 44.2L357.1 40.4L358.8 36.3L354.6 29.7L355.5 24.8L360.4 19.8L357.1 14.9L357.1 6.6M332.4 41.3L330.7 52.8L324.9 56.9L317.5 56.1M330.7 52.8L334.8 56.9L333.2 69.3L331.5 85.0M358.8 39.6L363.7 49.5L362.1 66.0L358.8 85.0M363.7 49.5L380.2 48.7L390.1 47.0L402.0 49.5M380.2 48.7L378.6 85.0M360.4 19.8L373.6 18.2L380.2 21.5L386.8 31.4L390.9 34.7L390.1 42.9L390.9 47.0M373.6 18.2L375.3 9.9L383.5 3.3L390.1 0.0M396.7 24.8L390.9 34.7M268.0 54.5L272.1 55.3L273.0 99.0M273.0 76.2L301.8 76.2L297.7 66.0L292.8 54.5M301.8 76.2L304.3 82.5M270.5 100.7L269.7 134.0M305.1 99.0L305.1 105.6L310.1 112.2L312.6 122.1L314.2 134.0M301.8 112.2L310.1 112.2L325.8 113.9L340.6 112.2L353.8 114.7L367.0 113.9M335.7 86.6L337.3 99.0L340.6 112.2L343.9 115.5L342.3 125.4L340.6 134.0M301.8 112.2L301.0 122.1L292.8 134.0M312.6 122.1L324.1 122.1L334.0 127.1L342.3 125.4M372.8 86.6L373.6 94.1L372.0 99.0M408.6 3.3L409.4 13.2L411.9 19.0L402.0 27.2M411.9 19.0L421.8 20.6L423.5 25.6L426.8 38.0L425.9 40.4M423.5 25.6L446.6 23.9L454.8 18.2L456.5 14.0L453.2 11.6L451.5 5.0M453.2 14.0L466.4 14.9M446.6 23.9L451.5 33.0L453.2 39.6L458.1 41.3M411.9 38.0L418.5 37.1L426.8 39.6L435.0 44.6L441.6 45.4L448.2 48.7M411.9 38.0L408.6 47.9L407.0 54.5L402.0 52.8M407.0 54.5L411.9 66.0L416.9 70.1L426.8 71.8L425.9 84.2M426.8 71.8L435.0 65.2L443.3 60.2L448.2 49.5M443.3 60.2L451.5 63.5L453.2 72.6L459.8 79.2L461.4 85.0M459.8 77.6L471.3 69.3L476.3 67.7L475.4 49.5L474.6 40.4L479.6 37.1M462.2 40.4L474.6 39.6M479.6 37.1L481.2 24.8L483.7 18.2L482.9 14.9L473.0 15.7L467.2 14.9M483.7 18.2L494.4 24.8L501.0 33.0L505.1 35.5L515.9 29.7L522.5 23.1L536.0 16.5M481.2 39.6L486.2 43.7L492.8 44.6L505.1 35.5M492.8 44.6L494.4 52.8L499.4 58.6L514.2 60.2L517.5 54.5L524.1 42.9L528.2 38.8L527.4 29.7L522.5 26.4M499.4 58.6L492.8 66.0L487.8 69.3L476.3 67.7M487.8 69.3L494.4 77.6L496.1 82.5L496.9 86.6M514.2 60.2L515.9 66.0L512.6 75.9L510.1 86.6M515.9 66.0L524.1 68.5L532.4 62.7L536.0 61.1M528.2 38.8L536.0 51.2M524.1 68.5L529.9 74.3L530.7 87.5M441.6 88.3L440.8 95.7L437.5 103.1L436.7 115.5L441.6 112.2L446.6 118.8L453.2 130.4M440.8 102.3L451.5 104.0L459.8 105.6L469.7 107.3M473.0 88.3L471.3 99.0L469.7 107.3L468.8 115.5L473.0 122.1L474.6 128.7L473.0 134.0M471.3 99.0L479.6 98.2L487.8 100.7L494.4 107.3L496.1 115.5L491.9 122.1L484.5 124.6L474.6 122.9M494.4 104.0L501.0 98.2L510.9 95.7L510.9 89.1M496.1 115.5L501.0 122.1L509.3 125.4L517.5 122.9L522.5 115.5L523.3 107.3L519.2 100.7L510.9 95.7M523.3 107.3L525.8 99.0L532.4 93.2L536.0 92.4M415.2 115.5L421.8 113.0L428.4 113.9M402.0 72.6L410.3 65.2M536.0 6.6L542.6 5.8L550.9 1.7L557.5 0.0M542.6 5.8L543.4 16.5L550.9 21.5L553.3 25.6L552.5 31.4L565.7 23.1L569.0 18.2L572.3 10.7L582.2 8.3M552.5 31.4L539.3 44.6L538.5 51.2L544.3 55.3L555.8 56.1L560.8 63.5L572.3 59.4L582.2 54.5M569.0 21.5L577.3 33.0L584.7 39.6L582.2 54.5M536.0 57.8L544.3 55.3M560.8 63.5L563.2 67.7L554.2 77.6L549.2 88.3M582.2 54.5L588.8 57.8L598.7 56.9M582.2 61.1L579.7 71.0L583.9 82.5L587.2 89.9M598.7 56.9L602.0 66.0L608.6 74.3L613.6 81.7L610.3 85.8L609.4 90.4M613.6 81.7L621.8 74.3L626.8 67.7L638.3 60.2L643.3 59.4M592.1 6.6L593.8 18.2L598.7 26.4L605.3 31.4L611.1 31.4L613.6 27.2L621.8 23.9L631.7 23.1L638.3 28.1L641.6 33.0M591.3 6.6L602.0 3.3L608.6 2.5L615.2 8.3L616.9 16.5L621.8 23.1M615.2 8.3L625.1 9.9L635.0 8.3L641.6 0.0M587.2 29.7L593.8 26.4L598.7 26.4M611.1 31.4L609.4 39.6L613.6 44.6L615.2 49.5L628.4 54.5L641.6 59.4M598.7 53.6L608.6 56.9L615.2 49.5M641.6 33.0L640.0 42.9L641.6 54.5L643.3 59.4L643.3 72.6L644.9 82.5M641.6 33.0L651.5 26.4L659.8 19.8L664.7 14.9M643.3 59.4L651.5 62.7L661.4 56.1L668.0 51.2L670.0 49.5M654.8 31.4L663.1 38.0L668.0 47.9M640.0 21.5L644.9 24.8L651.5 26.4M536.0 91.6L545.9 92.4L550.9 95.7L555.8 107.3L552.5 112.2L544.3 117.2L539.3 122.1L536.0 125.4M555.8 107.3L562.4 118.8L570.7 125.4L575.6 134.0M587.2 91.6L585.5 97.4L580.6 102.3L580.6 115.5L578.9 123.8L583.9 125.4M607.0 91.6L610.3 100.7L613.6 105.6L608.6 112.2L607.0 122.1L610.3 128.7L607.0 134.0M613.6 105.6L621.8 104.8L628.4 112.2L638.3 109.7L651.5 105.6L653.2 99.0L648.2 90.8M628.4 112.2L630.1 123.8L626.8 134.0M651.5 105.6L659.8 108.9L661.4 115.5L670.0 112.2M661.4 115.5L658.1 120.5L651.5 123.8L641.6 127.1L631.7 125.4M583.9 125.4L590.5 123.8M670.0 9.9L676.6 6.6L686.5 9.9L693.1 16.5L698.1 19.8L701.4 28.1L694.8 30.5L686.5 33.0L679.9 37.1L673.3 33.0L670.0 29.7M686.5 0.0L689.8 6.6L686.5 9.9M708.0 0.0L709.6 9.9L711.3 16.5L706.3 23.1L701.4 28.1L708.0 33.0L711.3 38.8M679.9 37.1L676.6 46.2L675.0 52.8L670.0 54.5M675.0 52.8L684.9 52.8L690.6 56.9M690.6 64.4L696.4 71.0L703.0 69.3L706.3 65.2L724.5 64.4L732.7 61.9L727.8 56.9L719.5 51.2L716.2 44.6L712.9 38.0M696.4 71.0L689.8 79.2L683.2 84.2L682.4 89.9M724.5 64.4L729.4 74.3L731.1 82.5L732.7 89.9M731.1 77.6L745.9 72.6L749.2 67.7L762.4 64.4L769.0 61.1M727.8 56.9L736.0 52.8L744.3 49.5L742.6 41.3L737.7 33.0L734.4 28.1M744.3 49.5L752.5 48.7L755.8 43.7L762.4 42.1L770.7 37.1M762.4 42.1L769.0 52.8L772.3 57.8L777.3 59.4L785.5 54.5L793.8 51.2L800.0 49.5M769.0 61.1L775.6 69.3L782.2 82.5L783.9 86.6L793.8 79.2L800.0 77.6M765.7 5.0L772.3 9.1L782.2 9.9L792.1 11.6L800.0 14.9M670.0 97.4L678.3 94.1L689.8 91.6M709.6 91.6L708.8 99.0L703.0 104.0L708.0 105.6L708.0 115.5L707.1 134.0M708.0 105.6L719.5 102.3L726.1 107.3L732.7 108.1L741.0 105.6L749.2 100.7L755.8 95.7L759.9 90.8M732.7 108.1L731.1 115.5L727.8 122.1L736.0 125.4L737.7 130.4M755.8 95.7L757.5 102.3L750.9 108.9L755.8 115.5L762.4 115.5M777.3 108.9L785.5 115.5L792.1 120.5L795.4 125.4L792.1 134.0M792.1 120.5L800.0 115.5M670.0 115.5L675.0 118.8L679.9 115.5L686.5 113.9M708.0 127.1L719.5 128.7L727.8 122.9M0.0 136.5L6.6 140.6L3.3 147.2L11.6 149.7L21.5 153.8L29.7 148.0L51.2 148.0L52.0 152.2L69.3 153.0L82.5 153.8L95.7 152.2L95.7 146.4L134.0 146.4M35.5 134.0L35.5 140.6L33.0 143.9L33.0 148.0M58.6 134.0L58.6 152.2M21.5 153.8L20.6 162.1L23.9 168.7L0.0 169.0M26.4 169.0L26.4 184.3L42.1 185.2L42.1 192.6L66.0 192.6L66.8 200.0L82.5 200.0M26.4 184.3L25.6 191.8L22.3 200.0L2.5 200.0L2.5 231.4L5.0 231.4L5.0 268.0M69.3 153.0L66.0 162.1L59.4 168.7L58.6 175.3L58.6 185.2M82.5 153.8L82.5 231.4L74.3 232.2L75.1 239.6L76.7 244.6L77.6 256.1L81.7 256.9L81.7 268.0M82.5 169.5L134.0 169.5M82.5 192.6L122.1 192.6L134.0 193.4M122.4 192.6L122.4 219.0M82.5 219.5L130.4 219.5M130.4 219.5L130.4 239.6L77.6 240.4M56.1 200.0L52.8 206.6L57.8 209.9L56.1 216.5L52.0 219.8L54.5 223.9L51.2 227.2L58.6 228.1L58.6 241.3L57.8 256.1L52.8 261.9L52.8 268.0M3.3 225.6L9.9 225.6L18.2 229.4L26.4 228.9L33.0 226.4L38.0 228.9L39.6 231.4M26.4 228.9L25.6 238.8L34.7 239.6M63.5 239.6L63.5 233.8L69.3 231.7L74.3 232.2M33.0 252.8L33.0 261.1L38.0 268.0M43.7 224.4L51.2 224.4M81.7 262.7L115.5 264.4M163.7 134.0L163.7 143.1M138.1 143.9L138.1 193.4L134.0 193.4M134.0 169.5L138.1 169.5M138.1 193.4L145.6 193.4M186.8 150.5L196.7 148.0L203.3 148.0L208.3 153.8L214.9 149.7L219.8 145.6L221.5 142.3L223.1 134.0M208.3 153.8L207.4 159.6L201.7 164.5L200.0 172.0L198.4 180.2M168.7 181.9L173.6 176.1L180.2 174.4L186.8 174.4L198.4 180.2L200.0 186.8L200.0 195.9M207.4 159.6L216.5 164.5L226.4 169.5L233.0 172.8L241.3 162.1L239.6 160.4L233.0 157.9L226.4 154.6L223.9 148.9L221.5 145.6M241.3 161.2L262.7 161.7L264.4 175.3L262.7 185.2L256.1 191.8L246.2 195.1L228.9 193.4L228.9 179.4M256.9 160.4L256.1 143.9L257.8 137.3L260.2 134.0M155.5 197.5L175.3 196.7L181.9 195.9L186.8 197.5L200.0 196.7L219.8 196.4L219.8 193.4L228.9 193.4M186.8 197.5L186.5 231.4M219.8 196.4L219.5 231.4M246.2 195.1L249.5 205.0L250.3 210.7L250.3 231.4M250.3 210.7L256.1 209.9L261.1 203.3L264.4 200.0L268.0 198.4M180.2 233.0L180.2 260.2L184.3 261.1L184.3 268.0M208.3 233.0L208.3 244.6L212.4 245.4L212.9 268.0M233.0 233.0L233.0 243.7L231.4 247.9L227.2 248.2L227.2 268.0M247.9 233.0L247.9 243.7L252.8 244.6L253.1 252.8L268.0 253.1M255.3 253.6L255.3 268.0M134.0 244.6L143.9 244.6L144.7 252.0L142.3 259.4L141.4 268.0M144.7 256.1L148.9 253.6L155.5 257.8L162.1 256.1M163.7 252.0L180.2 252.5M216.5 266.8L254.5 267.3M292.8 134.0L292.8 156.3L295.2 159.6L294.4 175.3L291.1 183.5L290.3 193.4L293.6 196.7L301.0 197.5L306.8 195.1M307.6 139.0L306.8 147.2L314.2 149.7L315.0 153.8M306.0 155.5L307.6 161.2L306.8 170.3L309.3 180.2L310.9 186.8L306.0 191.8L307.6 196.7L308.4 205.0L309.3 231.4M310.9 157.1L317.5 159.6L329.1 157.1L329.1 154.6M329.1 157.1L329.9 167.0L327.4 172.0L334.0 176.9L334.8 181.9L330.7 185.2L330.7 188.5L322.5 188.5L312.6 190.9L307.6 192.6M330.7 188.5L335.7 190.9L340.6 195.9L340.6 206.6L339.8 216.5L339.0 230.5M335.7 176.9L339.0 174.4L347.2 177.2L357.1 174.4L365.4 168.7L367.8 157.1L367.0 148.9M357.1 174.4L357.9 180.2L362.1 185.2L362.9 191.8L367.8 192.6L367.0 231.4M340.6 195.9L350.5 191.8L362.9 191.8L373.6 191.8L383.5 195.1L390.1 191.8M367.8 157.1L376.9 160.4L386.8 163.7L391.8 165.4M268.0 183.5L274.6 186.8L281.2 189.3L281.2 196.7L280.4 231.4M268.0 197.5L281.2 196.7M281.2 195.1L290.3 195.1M343.1 134.0L343.1 142.3L350.5 143.9L360.4 146.4L367.0 148.9M380.2 139.0L381.9 143.9L388.5 139.0L393.4 135.7M268.0 159.6L292.8 158.8M395.1 176.9L396.7 181.9L393.4 188.5L395.1 203.3L395.1 231.4M281.2 233.0L281.2 252.8L283.7 256.1L283.7 268.0M268.0 252.8L281.2 252.8M301.8 241.3L309.3 241.3L314.2 247.9L317.5 252.8L324.1 255.3L334.0 249.5L342.3 247.9L350.5 249.5L357.1 251.2L362.1 255.3M350.5 249.5L350.5 259.4L348.9 268.0M367.8 233.0L367.8 246.2L362.1 255.3M402.0 142.3L410.3 145.6L411.9 150.5L408.6 160.4L405.3 168.7L409.4 170.3L408.6 185.2L411.9 198.4L413.6 200.8L402.0 208.3M409.4 170.3L420.2 172.8L426.8 176.9L432.5 173.6L437.5 175.3M413.6 200.8L420.2 200.0L426.8 203.3L435.0 198.4L437.5 195.1L439.1 176.9M418.5 201.7L426.8 209.9L430.9 219.8L433.4 223.1L433.4 232.2M437.5 200.0L444.9 199.2L453.2 200.8L459.8 205.0L465.5 209.9M437.5 203.3L434.2 211.6L433.4 219.8M426.8 143.9L435.0 146.4L444.9 146.4L458.1 145.6L454.8 139.0L453.2 134.0M444.9 146.4L445.7 155.5L443.3 165.4L440.8 169.5L444.9 173.6L453.2 174.4L458.1 173.6M458.1 145.6L464.7 157.1L459.8 163.7L458.1 173.6L461.4 180.2L466.4 185.2L474.6 186.8L488.6 184.3L491.1 183.5M464.7 157.1L474.6 156.3L481.2 158.8L486.2 161.2L487.8 175.3L491.1 183.5M481.2 158.8L483.7 152.2L482.9 143.9L487.8 139.0L491.1 134.0M486.2 161.2L496.1 160.4L507.6 160.4L511.7 162.1L512.6 152.2L515.9 147.2L514.2 139.0L514.2 134.0M511.7 162.1L512.6 167.0L504.3 176.9L499.4 182.7L491.1 183.5M512.6 163.7L524.1 162.9L536.0 165.4M466.4 185.2L465.5 196.7L464.7 205.0M491.1 185.2L492.8 195.1L495.2 197.5L491.1 203.3L481.2 206.6L477.1 213.2L471.3 211.6M499.4 182.7L504.3 190.1L510.9 195.1L515.9 198.4L507.6 213.2L503.5 219.8L504.3 224.8L501.0 233.0M491.1 203.3L499.4 208.3L502.7 216.5L503.5 219.8M515.9 198.4L520.8 190.9L524.1 183.5L529.1 178.6L536.0 175.3M520.8 190.9L529.1 195.1L534.0 200.0L536.0 203.3M468.0 211.6L468.0 232.2M433.4 233.8L437.5 238.0L432.5 246.2L431.7 256.1L431.7 266.0L446.6 266.8M504.3 234.7L499.4 242.9L496.1 252.8L493.6 259.4M512.6 234.7L512.6 242.9L517.5 244.6L517.5 251.2L524.1 252.0L520.0 256.9L527.4 257.8L529.1 268.0M484.5 247.9L479.6 256.1L474.6 264.4L473.0 268.0M542.6 134.0L550.9 142.3L555.0 150.5L552.5 155.5L545.9 160.4L536.0 163.7M555.0 150.5L565.7 145.6L575.6 143.1L580.6 139.0L578.9 134.0M580.6 139.0L585.5 150.5L587.2 154.6M585.5 150.5L592.1 143.9L600.4 141.4L602.0 134.0M536.0 181.9L539.3 186.8L536.0 193.4M557.5 167.0L562.4 173.6L552.5 181.9L547.6 188.5L542.6 200.0L536.0 206.6M569.0 178.6L574.0 188.5L575.6 200.0L571.5 205.0L565.7 208.3L555.8 209.1L550.9 206.6M571.5 205.0L578.9 211.6L583.0 213.2M574.0 173.6L580.6 172.8L588.8 176.9L598.7 181.0L605.3 183.5L607.0 188.5M587.2 155.5L593.8 158.8L593.8 172.0L595.4 176.9M593.8 158.8L602.0 155.5L608.6 153.8L615.2 157.1L621.8 153.8L625.1 150.5L630.1 140.6L628.4 134.0M621.8 153.8L626.8 165.4L631.7 172.0L631.7 180.2M630.1 145.6L638.3 146.4L644.9 150.5L651.5 148.9L656.5 153.8L658.1 162.1L659.8 172.0M658.1 140.6L658.9 148.9L656.5 153.8M607.8 192.6L618.5 191.8L628.4 193.4L636.7 192.6L637.5 196.7L633.4 201.7L629.2 205.0L630.1 208.3L641.6 205.0L654.8 203.3M654.0 190.1L654.8 203.3L658.9 209.9L664.7 213.2L666.4 223.1L670.0 228.1M654.0 190.1L663.1 186.8L670.0 185.2M603.7 206.6L608.6 211.6L616.9 209.9L626.8 210.7L630.1 208.3M626.8 210.7L625.1 218.2L616.9 221.5L610.3 226.4L607.0 233.0M625.1 218.2L633.4 219.8L638.3 226.4L641.6 232.2M555.8 209.1L552.5 219.8L549.2 233.0M544.3 234.7L542.6 246.2L539.3 256.1L536.0 257.8M559.1 234.7L559.9 246.2L557.5 256.1L557.5 268.0M559.9 246.2L575.6 246.2L583.9 251.2L587.2 259.4L590.5 266.0M592.9 235.5L597.1 241.3L596.2 249.5L598.7 256.1L593.8 264.4L592.1 268.0M610.3 234.7L615.2 239.6L620.2 241.3L621.8 249.5L615.2 256.9L615.2 268.0M621.8 249.5L628.4 252.8L633.4 249.5L635.0 239.6L640.0 236.3L639.1 233.8M598.7 256.1L608.6 256.1L615.2 256.9M628.4 252.8L635.0 259.4L641.6 256.1L651.5 255.3L654.8 257.8M536.0 266.0L552.5 266.0M675.0 134.0L683.2 142.3L687.3 147.2M683.2 162.9L688.2 170.3L696.4 176.9L698.1 183.5M689.8 170.3L703.0 167.0L712.9 162.1L724.5 158.8L727.8 159.6M717.9 148.9L722.8 155.5L727.8 159.6L732.7 168.7L732.7 176.9M727.8 137.3L739.3 140.6L744.3 150.5L742.6 162.1L732.7 168.7M744.3 155.5L752.5 153.8L760.8 145.6L757.5 139.0L749.2 134.0M760.8 145.6L770.7 147.2L775.6 153.8L785.5 160.4L800.0 163.7M755.8 158.8L762.4 165.4L765.7 172.0L767.4 180.2M772.3 134.0L769.0 142.3M736.0 181.9L744.3 183.5L755.8 182.7L767.4 180.2L777.3 181.0L800.0 181.0M777.3 181.0L775.6 200.0L772.3 214.9M790.5 181.9L795.4 191.8L800.0 196.7M670.0 188.5L676.6 195.1L686.5 206.6L681.6 216.5L676.6 226.4M686.5 206.6L694.8 200.0L696.4 195.1L703.0 191.8L709.6 192.6L714.6 190.9L727.8 188.5L734.4 190.1L734.4 196.7L729.4 206.6L728.6 209.9M696.4 195.1L708.0 203.3L710.4 211.6L709.6 219.8M734.4 196.7L744.3 197.5L750.9 203.3L755.8 209.9L755.8 214.9M738.5 216.5L738.5 241.3L744.3 247.9L749.2 256.1L755.8 261.1M684.9 233.0L686.5 241.3L691.5 257.8L691.5 268.0M686.5 231.4L699.7 227.2L711.3 225.6L714.6 233.0L717.9 241.3L719.5 249.5M691.5 257.8L703.0 252.8L719.5 247.9M765.7 216.5L769.0 223.1L772.3 234.7L775.6 240.4L785.5 242.9L793.8 244.6M793.8 228.1L792.1 236.3L793.8 247.9L800.0 248.7M775.6 240.4L770.7 249.5L769.0 259.4L767.4 268.0M719.5 252.8L721.2 261.1L722.8 268.0M0.0 277.6L33.8 277.9L35.5 274.6L38.8 270.5L57.8 270.5L57.8 268.0M9.1 268.0L9.1 277.1M33.8 277.9L33.0 299.4L41.3 300.2L46.2 301.8L47.9 307.6L52.8 312.6L54.5 319.2L60.2 322.5L67.7 323.3L75.1 324.9M63.5 271.3L69.3 279.6L77.6 287.8L81.7 291.1L85.8 290.3L85.8 279.6L81.7 278.7L81.7 268.0M81.7 291.1L79.2 297.7L80.9 304.3L77.6 310.1L72.6 312.6L71.8 317.5L75.1 324.9M77.6 310.1L110.6 310.6L110.9 322.5L126.2 322.5M31.4 306.0L31.4 312.6L14.9 312.6L13.2 322.5L13.2 339.0M0.0 315.0L12.4 315.0M31.4 306.0L36.3 306.8L41.3 311.7L47.9 312.6M54.5 320.8L49.5 322.5L44.6 323.3L44.6 339.8L52.8 340.6L52.5 360.4M13.2 339.3L44.6 339.8M0.0 347.2L12.4 347.2M12.4 339.0L12.4 362.1L10.7 367.0L12.4 375.3L51.2 375.3M52.5 360.4L59.4 360.4L62.7 363.7L68.5 363.4M51.5 360.4L51.5 402.0M12.4 375.3L13.2 381.9L6.6 386.8L2.5 393.4L1.7 402.0M72.6 363.4L103.1 363.4L103.6 355.5L110.6 354.6L111.4 323.3M103.6 363.4L104.0 386.0L118.8 386.5L118.8 381.9L127.1 381.0M127.1 296.9L126.2 322.5L126.2 337.3L134.0 338.1M126.2 337.3L126.7 380.2L127.1 386.8L132.0 387.6L134.0 383.5M127.1 315.0L134.0 315.0M105.6 386.8L108.9 393.4L108.1 402.0M118.8 275.4L125.4 281.2L130.4 283.7L134.0 283.7M127.1 296.9L134.0 296.9M92.4 400.8L105.6 401.3M143.9 268.0L143.9 271.3L180.2 271.3L200.0 271.3L203.3 274.6L215.7 275.4M180.2 271.3L180.5 303.5L190.1 304.3L196.4 305.1L196.4 333.2M149.7 306.8L180.2 306.3M143.9 289.5L149.7 296.9L149.7 314.2L134.0 315.0M134.0 276.3L143.1 275.4M134.0 283.7L138.1 283.2M215.7 268.0L216.2 314.2L224.4 314.5L224.4 337.3L220.6 339.0L220.6 345.6L196.7 346.4M196.4 306.3L216.2 306.8M216.2 287.5L239.6 287.8L247.9 287.8L247.9 284.5L252.8 276.3L253.6 268.0M247.9 287.8L247.5 314.2L224.4 314.5M247.9 314.2L256.1 314.2L268.0 313.4M255.8 314.2L255.8 348.9L268.0 349.2M165.4 306.0L165.4 335.7L162.1 337.3L149.7 338.6L149.7 350.2L175.3 349.7L196.4 348.9M134.0 338.1L146.4 338.1L146.4 342.3L140.6 343.9L137.3 346.4L140.6 348.0M166.2 330.7L176.9 330.7L177.7 333.2L196.4 333.2M196.4 333.2L196.4 369.5L200.0 370.3L206.6 368.7L211.6 364.5L219.8 362.4L227.7 361.2L227.7 383.5M231.4 343.9L239.6 343.1L239.6 339.0L255.3 338.1M231.4 343.9L232.7 359.6M227.7 360.4L257.8 359.6L258.6 365.4L268.0 362.9M258.6 365.4L258.6 384.3M151.3 350.5L152.2 368.7L149.7 370.3L147.2 375.3L147.2 380.2L175.3 390.1L178.6 390.9M134.0 381.9L139.0 380.2L136.5 376.9L147.2 380.2M177.7 373.6L186.5 374.4L186.5 383.5L181.9 384.3L177.7 391.8L173.6 402.0M200.0 370.3L200.3 384.3M181.9 384.3L210.7 384.3L210.7 400.0L218.2 400.0L218.2 392.6L226.4 391.8L226.7 384.3L268.0 384.3M247.9 384.3L247.9 402.0M134.0 383.5L134.8 402.0M268.0 279.6L296.9 279.6M284.5 268.0L284.5 279.2M268.8 279.6L268.8 310.9L268.0 312.6M268.0 312.6L293.6 313.4M298.5 268.0L343.9 268.8L345.6 268.0M296.9 292.8L307.6 292.8L334.0 294.1L353.8 294.1L375.3 293.6L390.1 292.8L402.0 294.1M343.6 268.8L343.6 293.6M375.3 268.0L374.9 293.6L374.4 320.8L370.3 320.8L373.6 324.1L376.9 330.7L383.5 332.4L386.8 335.7M335.3 294.4L335.7 321.6L369.5 321.1M335.7 321.6L335.7 331.5L340.6 332.7L343.6 333.2L343.6 348.0L351.3 348.5L351.3 355.5L335.7 356.3L333.2 358.8L333.2 362.9L320.8 363.7L312.6 362.9L301.0 362.9L289.5 362.4M294.4 316.7L309.3 316.7L312.6 319.2L312.9 362.9M312.9 328.2L335.3 328.2M289.5 343.9L284.5 344.7L277.9 349.7L271.3 350.5L272.1 358.8L268.0 360.4M320.8 363.7L320.8 402.0M268.0 384.3L285.3 384.3M386.8 335.7L383.5 340.6L380.2 347.2L376.9 353.8M386.8 335.7L393.4 334.8L402.0 335.7M393.4 324.1L402.0 322.5M317.5 398.4L312.6 402.0M414.4 268.0L415.2 277.9L414.4 293.6L402.0 294.4M416.9 274.6L423.5 277.9L431.7 274.6L435.0 268.0M414.4 293.6L422.6 294.4L425.1 298.5L433.4 311.7L432.5 324.1L430.1 326.6M420.2 299.4L411.9 309.3L405.3 315.9L402.0 317.5M446.6 268.0L447.4 274.6L451.5 279.6L449.9 284.5L449.5 303.5M433.4 311.7L443.3 303.5L469.7 303.5L469.7 310.9L473.0 311.7L477.1 322.5L476.3 326.6L492.8 325.8L502.7 324.9M469.7 303.5L471.3 297.7L482.9 289.5L487.8 282.9L489.5 276.3M430.1 326.6L436.7 322.5L443.3 323.3L446.6 330.7L452.3 334.8L458.1 330.7L465.5 325.8L476.3 326.6M452.3 334.8L452.3 340.6L446.6 348.9L442.4 349.7L444.9 355.5M446.6 348.9L454.8 350.5L456.5 357.1M402.0 336.5L408.6 342.3L414.4 340.6L417.7 343.9L417.7 352.2M492.8 325.8L492.4 331.5L485.3 334.0L487.8 337.3L484.5 343.9L482.9 353.8M502.7 330.7L514.2 330.4L529.1 329.1L536.0 328.2M529.1 314.2L529.1 345.6M501.8 313.4L514.2 312.6L529.1 311.7L536.0 311.2M504.3 291.1L507.6 287.8L517.5 281.2L520.8 274.6L524.1 268.0M524.1 277.9L527.4 284.5L536.0 286.2M473.0 358.8L472.1 363.7L464.7 365.4L464.7 368.7L459.8 373.6L459.8 380.2L456.5 383.5L449.0 383.5L448.2 391.8M473.0 365.4L484.5 366.2L509.3 366.7M483.7 367.0L483.7 402.0M511.7 372.8L530.7 372.8L534.0 369.5L536.0 373.6M515.9 398.4L524.1 395.1L536.0 394.2M459.8 400.0L482.9 400.8M530.7 286.2L530.7 310.9M557.5 268.0L557.5 312.6M536.0 285.3L550.9 284.5L557.5 284.5L562.4 287.0L577.3 287.5L587.2 287.8M580.6 269.7L582.2 277.9L587.2 281.2L587.2 310.9L592.1 315.9L597.1 316.7L599.5 308.4M557.5 271.3L569.0 272.1L580.6 269.7M592.1 268.0L593.8 274.6L598.7 279.6L607.0 282.9M587.2 291.1L607.0 291.1M616.9 268.0L617.7 275.4L625.1 276.3L631.7 277.9L633.4 284.5L631.7 289.5L635.0 296.1L641.6 298.5L649.9 296.1M633.4 277.9L635.0 271.3L635.0 268.0M631.7 289.5L638.3 281.2L643.3 277.9L654.8 279.6L670.0 278.7M536.0 313.4L552.5 314.2L575.6 314.2L576.4 307.6L579.7 304.3L586.3 305.1M551.7 314.2L551.7 339.0M575.6 314.2L576.4 322.5L580.6 324.1L580.6 350.5M580.6 324.1L585.5 327.4L592.1 321.6L597.1 316.7M599.5 308.4L608.6 309.3L616.9 312.6L635.0 296.1M616.9 312.6L615.2 319.2L620.2 327.4L608.6 340.6L602.0 345.6M620.2 327.4L628.4 329.1L635.0 334.0L641.6 338.1L635.0 350.5L630.1 355.5M621.8 315.0L631.7 317.5L638.3 317.5L640.8 324.1L635.0 334.0M640.8 324.1L651.5 319.2L659.8 322.5L670.0 319.2M651.5 294.4L654.8 306.0L651.5 317.5M641.6 338.1L648.2 345.6L651.5 347.2L661.4 339.0L670.0 335.7M659.8 322.5L658.1 332.4L661.4 339.0M536.0 340.6L539.3 340.6L539.3 359.6L544.3 360.4M539.3 345.6L551.7 344.7M544.3 360.4L544.3 363.7L536.0 370.3M544.3 363.7L559.1 362.9L560.8 353.8M559.1 367.0L564.1 363.7L573.1 362.1L577.3 368.7L577.3 380.2L570.7 386.8L567.4 388.5M559.1 370.3L560.8 380.2L567.4 388.5L569.0 393.4L567.4 402.0M580.6 353.8L585.5 352.2L593.8 353.0L598.7 350.5L602.0 345.6M592.1 353.8L595.4 357.9L602.8 362.9L603.7 367.0L611.9 371.1L607.0 376.9L598.7 383.5L597.1 386.8M602.8 362.9L610.3 357.1L611.9 344.7M611.9 371.1L616.9 376.9L618.5 386.8L620.2 398.4L621.8 402.0M616.9 376.9L628.4 368.7L630.1 355.5M630.1 365.4L640.0 371.1L659.8 367.0L670.0 365.4M640.0 371.1L640.8 393.4L621.8 398.4M659.8 367.0L663.1 373.6L668.0 376.9L670.0 383.5M640.8 393.4L651.5 391.8L661.4 389.3L670.0 390.1M578.9 368.7L585.5 367.0L585.5 362.1M578.9 378.6L588.8 378.6L597.1 381.9M569.0 389.3L577.3 387.6L585.5 390.1L597.1 390.9L597.9 402.0M536.0 390.1L544.3 390.9L557.5 390.1M673.3 281.2L672.5 292.8L674.1 301.0L681.6 301.8L691.5 297.7L697.2 295.2M674.1 301.0L678.3 310.9L684.9 319.2L693.1 322.5L703.0 321.6L709.6 321.6M670.0 319.2L678.3 317.5M707.1 322.5L709.6 332.4L712.9 340.6L717.9 352.2M693.1 322.5L684.9 334.0L681.6 340.6L686.5 350.5L689.8 354.6L694.8 352.2L703.0 357.1L711.3 353.0L722.8 352.2L732.7 347.2L737.7 348.9M670.0 347.2L681.6 348.9L686.5 350.5M678.3 358.8L683.2 353.8L688.2 354.6M705.5 357.9L709.6 367.0L714.6 376.9L717.9 381.9L727.8 381.9L731.1 378.6L726.1 370.3L722.8 362.1L722.8 352.2M691.5 366.2L694.8 375.3L697.2 386.8L699.7 389.3L699.7 396.7L703.0 402.0M697.2 386.8L711.3 381.9L717.9 381.9M727.8 381.9L736.0 386.8L737.7 395.1L736.0 402.0M736.0 386.0L742.6 384.3L749.2 388.5L757.5 390.1L764.1 383.5M699.7 389.3L689.8 393.4L683.2 400.0L681.6 402.0M722.8 268.0L724.5 273.0L731.1 277.9L737.7 274.6L737.7 268.0M731.1 277.9L717.9 287.8L708.0 294.4L701.4 299.4M731.1 277.9L739.3 286.2L742.6 291.1L749.2 294.4L757.5 301.0L760.8 305.1L764.1 307.6M739.3 286.2L731.1 291.1L732.7 297.7L737.7 304.3L736.0 310.9L731.1 315.9L732.7 322.5L737.7 320.0L742.6 322.5L750.9 322.5L755.8 322.5L764.1 307.6M712.9 315.9L721.2 315.0L731.1 315.9M764.1 307.6L772.3 305.1L778.9 306.0L785.5 310.9L790.5 314.2M759.9 302.7L762.4 294.4L769.0 289.5L774.0 284.5M750.9 323.3L744.3 328.2L745.1 335.7L742.6 342.3L741.8 350.5M750.9 323.3L762.4 324.1L765.7 330.7L772.3 334.0L782.2 337.3L788.8 332.4L792.1 324.1M731.1 378.6L744.3 367.0L752.5 362.1M759.1 357.9L769.0 348.9L782.2 339.0L788.8 332.4M772.3 391.8L785.5 380.2L800.0 368.7M670.0 375.3L676.6 369.5L679.9 370.3M785.5 268.0L788.8 279.6L795.4 276.3L800.0 277.9M51.2 402.0L51.2 409.4M92.4 402.0L92.4 409.4L89.1 423.5L89.1 440.0L105.6 440.8L108.9 437.5L107.3 431.7L104.8 425.1L108.9 420.2L112.2 416.9L110.6 402.0M112.2 416.9L123.8 416.9M75.9 409.4L92.4 409.4M5.0 410.3L6.6 426.8L7.4 436.7L14.9 438.3L17.3 443.3L18.2 451.5L11.6 464.7L10.7 474.6L0.0 475.4M52.8 410.3L47.9 418.5L42.1 426.8L39.6 438.3L33.0 444.9L24.8 449.9L18.2 451.5M65.2 410.3L62.7 418.5L58.6 426.8L56.9 438.3L52.8 448.2L49.5 451.5L49.5 464.7M39.6 438.3L41.3 446.6L52.8 448.2M49.5 451.5L77.6 451.2M105.6 440.8L107.3 446.6L95.7 448.2L95.4 458.9L89.9 459.8M107.3 446.6L115.5 451.5L122.1 453.2L134.0 454.8M122.1 453.2L115.5 459.8L113.9 468.0M49.5 464.7L51.2 468.0L46.2 474.6L44.6 481.2L66.0 480.4L71.0 477.9M10.7 474.6L13.2 482.9L19.8 484.5L26.4 476.3L28.1 469.7L34.7 464.7L49.5 463.1M19.8 484.5L21.5 491.1L16.5 493.6L18.2 501.0L24.8 507.6L31.4 509.3L39.6 502.7L42.9 507.6L42.1 514.2L44.6 520.8L34.7 524.1L33.0 532.4L28.1 536.0M47.9 481.2L48.7 491.1L47.9 501.0L42.9 507.6M107.3 470.5L105.6 481.2L105.6 492.8L106.9 517.5L105.6 536.0M87.5 491.9L95.7 487.8L104.0 482.9M106.9 494.4L134.0 494.4M0.0 505.1L9.9 505.6L10.7 536.0M67.7 510.1L85.8 511.7L95.7 515.9L97.4 518.3L105.6 518.3M44.6 520.8L57.8 521.6M62.7 525.8L66.0 530.7L74.3 534.0L112.2 534.8M106.9 526.6L125.4 526.1M5.8 435.0L0.0 440.0M134.0 408.6L143.9 413.6L157.1 418.5L162.1 421.0L179.4 420.2M173.6 402.0L169.5 410.3L167.0 416.9L162.1 421.0L157.9 428.4L156.3 435.0L148.9 439.1L139.0 441.6L134.0 445.7M179.4 416.5L210.7 416.5L233.0 416.9L248.7 417.2L268.0 416.5M179.4 416.5L179.4 431.7L180.5 448.2L210.7 448.5L239.6 448.5L268.0 447.4M210.7 402.0L210.7 516.7M248.7 402.0L248.7 416.9M240.4 417.7L240.4 515.0M179.4 444.9L175.3 447.4L167.0 449.9L160.4 454.8L155.5 459.8L153.8 465.5M175.3 447.4L177.7 458.1L179.4 468.0L179.9 479.6L180.5 494.4M134.0 455.1L141.4 455.1L141.9 463.1L146.4 463.4M179.9 479.2L210.7 479.2L240.4 479.2L268.0 478.7M142.3 481.2L141.4 493.6L155.5 495.2L185.2 495.2L185.5 518.3M141.4 493.6L143.9 502.7L150.5 510.9L149.7 517.5L155.5 520.8L167.0 519.5L185.5 518.3L205.0 517.5L221.5 516.7L240.4 515.5L257.8 513.4L268.0 510.9M134.0 525.8L141.4 525.4L143.9 522.5L150.5 520.0M141.4 525.8L141.4 536.0M161.2 520.8L161.2 536.0M178.6 519.5L178.6 536.0M204.6 517.5L204.6 536.0M238.3 515.9L238.3 536.0M320.8 402.0L321.6 408.6L359.6 408.9M284.5 411.1L296.1 409.9L299.4 406.1L309.3 404.5L312.6 402.0M268.0 416.5L282.5 416.5M296.1 409.9L294.4 418.5L300.2 426.8L302.7 435.0L303.5 444.9L307.6 446.6L315.0 442.4L319.2 444.9L317.5 449.9L324.1 451.5L328.2 446.6L324.9 441.6L322.5 435.0L319.2 430.9L322.5 425.1L325.8 416.9L329.9 410.3M317.5 450.7L312.6 454.8L306.0 461.4L306.8 467.2L313.4 471.3L308.4 473.0L307.6 482.9L305.1 491.1L301.0 496.1L301.8 501.0L302.7 506.0L296.9 512.6L296.1 520.8L301.0 529.1L303.5 536.0M328.2 451.5L329.1 456.5L344.7 456.5L344.2 441.6L348.0 440.0L348.0 425.1L351.3 425.1L352.2 421.8M351.7 409.4L351.7 421.8M378.6 448.2L375.3 454.8L351.3 456.5L351.3 471.3L344.7 472.1L344.7 456.5M278.7 471.3L308.4 471.6M268.0 447.4L279.6 447.4M268.0 479.6L276.3 479.6M344.7 475.4L344.7 487.0L336.5 487.5L336.0 499.4L333.7 500.2L333.7 510.1L336.5 510.6L336.5 514.5L390.1 514.5M347.2 473.8L353.8 478.7L362.1 486.2L369.5 494.4L393.4 495.7L393.4 501.8M390.9 453.2L395.1 461.4L396.7 468.0L393.4 474.6L398.4 477.9L390.1 479.6L390.4 494.4M302.7 500.7L333.7 500.2M390.1 501.8L402.0 501.8M390.1 501.8L390.1 520.8L383.5 524.1L375.3 527.4L372.8 536.0M344.7 515.0L344.7 525.8L341.4 526.6L341.4 536.0M268.0 510.1L273.0 509.3M274.6 525.8L301.0 526.1M398.4 464.7L402.0 463.9M456.5 402.0L456.5 431.7L459.8 432.5L465.5 432.5L464.7 440.0L465.5 454.8L472.1 454.8L472.6 447.4L480.4 446.6L480.4 436.7L482.9 435.0L487.8 433.4L499.4 434.2L507.6 433.4M487.8 402.0L487.8 433.4M426.8 461.4L430.9 460.6M430.9 460.6L436.7 454.8L441.6 456.5L446.6 460.6L454.8 461.4L459.8 458.9L465.5 454.8M402.0 463.9L408.6 464.7L411.9 467.2L418.5 468.8L422.6 468.0L426.8 461.4M420.2 469.7L421.8 474.6L427.6 478.7L427.6 501.8L417.7 502.3L402.0 502.3M454.8 466.0L459.8 473.0L465.5 472.1L468.0 477.9L499.4 478.7L499.4 455.6L480.4 446.6M459.8 473.8L457.3 479.6L457.8 501.8L435.8 502.3L434.2 495.2L428.4 495.2M499.4 461.4L506.8 461.4L507.6 457.3L529.1 457.3L529.1 453.2M499.4 478.7L501.0 486.2L512.6 487.0L517.5 492.8L526.6 492.8M499.4 478.7L499.4 497.7L487.8 499.4L482.9 509.3L473.8 510.1L473.8 502.7L466.4 501.8L464.7 495.2L458.1 495.2M424.3 502.7L424.3 530.7L420.2 531.5L420.2 536.0M444.1 502.7L442.4 515.9L446.6 517.5L446.2 536.0M482.0 510.1L482.9 519.2L478.7 525.8L477.9 533.2L446.6 533.7M477.9 533.2L501.0 534.0L501.0 524.9M509.3 524.9L517.5 524.1L520.0 520.8M519.2 422.6L536.0 422.6M525.8 445.7L536.0 445.7M473.8 534.0L473.8 536.0M542.6 402.0L542.6 421.8L536.0 422.6M542.6 421.8L554.2 423.5L555.0 448.2L557.5 451.5L558.3 477.9L557.5 506.0M536.0 446.6L554.2 447.4M566.5 402.0L567.4 411.9L569.0 420.2L575.6 426.8L580.6 431.7L588.8 434.2L592.9 436.7M554.2 423.5L565.7 423.5L569.0 420.2M567.4 411.1L597.1 411.6L597.4 423.5L592.9 436.7L598.7 441.6L601.2 448.2L605.3 453.2M586.3 402.0L587.2 411.1M602.8 402.0L602.0 411.9L597.4 415.2M597.4 423.5L613.6 423.5L616.9 420.2L621.0 417.7M614.4 423.5L616.9 430.1L621.8 434.2L625.9 435.8M580.6 431.7L577.3 440.0L574.8 449.9L564.9 450.7L557.5 451.5M574.8 449.9L577.3 459.8L575.6 473.0L574.8 484.5L574.0 506.0M578.9 461.4L582.2 465.5L587.2 464.7L588.8 474.6L592.9 479.6L592.9 484.5L574.8 484.5M587.2 464.7L592.1 459.8L597.1 453.2L605.3 453.2L611.9 454.8L617.7 458.1L618.5 461.4L617.7 473.0M605.3 453.2L615.2 444.9L625.1 436.7M618.5 460.6L623.5 453.2M627.6 439.1L635.0 438.3L640.0 443.3L640.0 451.5L644.1 458.9L644.9 463.9L635.0 473.0M592.9 479.6L602.0 483.7L608.6 477.1L614.4 473.3L635.0 473.3L635.8 515.9M602.0 483.7L607.0 489.5L608.6 496.1L635.0 496.4M608.6 496.1L611.9 506.0L611.1 512.6L605.3 515.9L604.5 524.1L605.3 536.0M557.5 506.0L574.0 506.0L578.9 506.8L611.1 506.8M536.0 505.1L557.5 506.3M558.3 479.6L544.3 478.7L540.1 477.9M559.1 479.6L565.7 486.2L574.0 487.0M578.9 507.6L585.5 512.6L584.7 527.4L583.9 536.0M561.6 506.8L561.6 519.2L564.9 524.1L565.7 536.0M538.5 506.0L538.5 520.0L536.0 520.0M536.0 533.2L583.9 533.7M611.9 512.6L621.0 516.7L621.8 536.0M621.0 516.7L635.8 515.9L644.9 514.2L645.7 524.1L644.9 536.0M635.8 487.8L651.5 487.8L658.1 484.5L653.2 477.9L658.1 471.3L666.4 463.1L670.0 461.4M644.9 463.9L651.5 471.3L654.8 474.6M654.8 487.8L658.9 497.7L661.4 507.6M636.7 512.6L658.1 512.6L661.4 507.6L670.0 501.0M644.1 458.9L654.8 453.2L663.1 449.0M649.9 420.2L654.8 430.1L661.4 443.3L668.0 458.1L670.0 461.4M641.6 425.1L649.9 420.2L661.4 413.6L670.0 409.4M651.5 402.0L654.0 415.2M625.1 402.0L626.8 411.9L628.4 418.5M645.7 524.9L656.5 524.1L663.1 530.7L670.0 529.1M670.0 410.3L676.6 423.5L683.2 429.2L684.9 435.0L691.5 435.8L696.4 440.8L704.7 444.1L705.5 451.5L709.6 453.2M683.2 429.2L694.8 427.6L701.4 430.1L711.3 426.8L716.2 425.1L714.6 416.9L713.7 408.6L708.0 402.0M716.2 425.1L722.8 430.1L717.9 436.7L719.5 441.6L711.3 447.4L709.6 453.2L717.9 454.8L724.5 458.9M733.5 402.0L734.4 413.6L731.1 423.5L722.8 428.4M731.1 423.5L737.7 426.8L743.4 425.9L745.1 420.2L748.4 417.7L760.8 416.9L767.4 414.4L772.3 417.7L782.2 410.3L791.3 407.8M743.4 425.9L747.6 438.3L752.5 444.1L754.2 445.7L749.2 449.9L742.6 454.8L739.3 459.8L736.8 466.4L737.7 472.1M772.3 417.7L767.4 430.1L764.1 440.0L754.2 445.7M764.1 440.0L770.7 442.4L777.3 448.2L783.9 453.2L788.8 454.8L790.5 461.4L793.8 471.3L797.1 476.3M754.2 449.9L757.5 458.1L760.8 464.7L759.1 474.6M788.8 454.8L795.4 451.5L800.0 449.9M670.0 466.4L674.1 474.6L679.9 484.5L684.9 487.0L686.5 491.9L694.8 494.4L699.7 499.4L706.3 505.1L717.9 502.7L722.8 501.8M670.0 502.7L684.9 487.8L691.5 481.2L700.5 472.1L703.0 463.1L703.0 460.6M700.5 472.1L712.9 468.8L723.6 468.0L728.6 473.0L737.7 472.1L747.6 473.0L757.5 475.4L765.7 477.1L770.7 482.9L772.3 484.5M706.3 471.3L708.0 482.9L709.6 494.4L714.6 501.0L717.9 502.7M722.8 468.0L721.2 484.5L718.7 502.7M737.7 473.0L741.0 484.5L739.3 494.4L738.5 504.3L742.6 507.6M722.8 501.8L732.7 505.1L742.6 507.6L747.6 514.2L755.8 517.5L762.4 507.6L765.7 499.4L772.3 496.1L775.6 491.1L772.3 484.5M754.2 474.6L755.8 487.8L759.1 492.8L772.3 496.1M772.3 484.5L785.5 481.2L792.1 480.9M775.6 491.1L782.2 494.4L785.5 501.0L787.2 502.7M769.0 499.4L774.0 502.7L773.1 510.9L778.9 517.5L785.5 520.8L795.4 525.8L800.0 527.4M722.8 502.7L722.8 512.6L717.0 513.4L716.2 528.2L693.1 528.7L692.3 517.5L699.7 509.3L706.3 505.1M670.0 515.9L679.9 519.2L692.3 517.5M680.7 519.2L680.7 536.0M716.2 524.1L724.5 530.7L731.1 536.0M747.6 514.2L745.9 520.0L745.6 536.0M755.8 517.5L764.1 525.8L772.3 532.4L775.6 536.0M708.8 529.1L708.8 536.0M792.1 527.4L788.8 536.0M670.0 441.6L676.6 438.3L684.9 435.0M788.8 502.7L795.4 501.0L800.0 504.3M10.7 536.0L10.7 557.5L6.6 558.3L0.0 560.8M21.5 544.3L22.3 550.9L28.1 554.2L26.4 560.8L16.5 564.1L14.9 567.4L9.9 564.1L9.1 559.1M74.3 536.0L73.4 555.8L68.5 555.8L61.1 556.6L52.8 559.1L47.9 563.2M73.4 555.8L79.2 559.1L81.7 564.1L81.7 588.0M79.2 558.3L112.2 557.5L134.0 557.1M112.2 536.0L112.2 557.1M119.1 557.5L118.8 588.5M26.4 560.8L33.0 568.2L34.7 575.6L29.7 585.5L25.6 590.5L25.6 601.2L0.0 601.7M25.6 601.2L29.7 610.3L30.5 621.8L29.7 633.4L34.7 640.0L37.1 643.3M37.1 588.8L37.1 598.7L41.3 602.0L46.2 600.4L44.6 596.2L40.4 595.4M46.2 600.4L47.0 605.3L42.9 609.4L45.4 612.7L56.1 611.1L59.4 608.6M72.6 589.6L69.3 598.7L66.0 608.6L62.7 616.9L59.4 621.8L56.9 625.9L49.5 630.9L40.4 633.4L30.5 633.4M62.7 614.4L97.4 614.4L98.2 589.6M97.4 614.4L91.6 621.8L87.5 625.9L86.6 635.0L87.5 636.7M92.4 619.8L117.2 619.3L117.5 588.8M117.2 619.3L118.0 631.7L118.8 638.3L123.8 644.9M49.5 630.9L52.8 636.7L57.8 643.3L62.7 648.2L75.9 649.0L85.8 649.9M37.1 643.3L39.6 649.9L42.9 654.8L51.2 657.3L64.4 658.1L79.2 658.4L85.8 653.2M79.2 658.4L77.6 666.4L79.2 670.0M0.0 649.9L6.6 648.2L9.1 643.3L16.5 640.8L24.8 640.8L34.7 641.6M11.6 654.8L13.2 659.8L17.3 661.4L16.5 670.0M89.1 641.6L97.4 648.2L105.6 654.8L108.9 659.8L113.9 658.1M141.4 536.0L141.4 587.2M134.0 557.5L150.5 557.1L156.3 559.1L157.1 553.3L173.6 552.5L174.4 549.2L200.8 549.5L223.1 549.5L246.2 549.5L268.0 549.2M161.2 536.0L163.7 545.9L164.5 552.5M181.9 536.0L188.5 539.3L190.9 544.3L190.9 549.2M205.0 536.0L205.0 549.5M238.3 536.0L238.3 549.2M156.3 559.1L157.1 569.0L159.6 575.6L164.5 578.9L167.0 581.4L172.8 582.2L172.8 588.0M185.5 550.0L185.5 588.0L200.0 588.5L208.3 588.0M200.8 549.5L200.8 556.6L208.3 557.1M223.1 549.5L223.9 587.2L224.8 596.2L246.2 596.2L246.5 549.5M209.1 569.0L209.1 641.6M209.9 596.2L224.8 596.2M247.0 588.5L268.0 588.5M242.1 597.1L242.6 611.9L268.0 612.2M242.6 611.9L242.9 635.0M193.4 619.3L209.1 619.0L223.1 617.7L242.1 616.9M193.4 619.3L193.1 630.9L186.8 631.7L186.8 635.0M134.0 588.8L136.5 598.7L140.6 610.3L142.3 615.2L153.8 617.7L172.0 618.0M141.4 615.2L141.4 670.0M134.0 649.9L137.3 651.5L140.6 656.5M140.6 656.5L152.2 660.6L158.8 663.9L164.5 661.4L169.5 663.1L172.0 659.8M152.2 660.6L151.3 670.0M172.0 662.2L178.6 663.1L183.5 661.4M306.0 536.0L308.4 539.3L315.0 544.3L315.0 550.9L312.6 557.5L310.9 565.7L312.6 574.0L311.7 583.9L311.7 592.1L309.3 598.7L312.6 603.7L308.4 607.0L306.8 611.9L307.6 616.0M277.9 578.1L284.5 575.6L309.3 575.3M268.0 549.2L274.6 549.2M268.0 588.8L276.3 588.8M268.0 612.7L277.9 612.7M341.4 536.0L340.6 541.0L339.0 544.3L341.4 550.9L334.0 551.7L329.1 554.2L325.8 559.1L324.1 563.2L317.5 570.7L312.6 574.0M325.8 560.8L330.7 563.2L337.3 566.5L343.9 567.4L350.5 565.4L400.0 565.4L400.8 572.3M338.1 566.5L337.6 583.9L338.6 588.8M372.0 536.0L370.3 544.3L367.0 549.2L360.4 554.2L353.8 560.8L350.5 565.4M370.3 589.6L363.7 593.8L360.4 602.0L360.4 611.9L363.7 618.5L367.0 625.1L368.7 628.4M400.0 589.6L400.0 618.5M391.8 536.0L395.1 541.0L402.0 541.8M420.2 536.0L420.2 541.0L405.3 541.3L405.3 587.2M402.0 571.5L405.3 571.5M426.8 541.8L427.6 547.6L435.8 541.8L437.5 548.4L443.3 549.2L444.1 541.0L446.6 536.0M443.3 549.2L443.3 587.2M473.8 536.0L473.8 570.7M444.1 571.0L461.4 571.0L473.8 570.7L479.6 570.7L481.2 564.9L487.8 563.2L494.4 566.5L496.1 562.4L501.0 561.6L501.0 536.0M479.6 570.7L496.1 571.0L496.1 587.2M501.0 560.8L524.1 561.1M428.4 589.6L428.4 635.0M454.8 589.6L454.8 614.4M492.8 589.6L489.5 595.4L486.2 605.3L485.3 609.4M487.8 603.7L496.1 603.7L496.9 607.8L499.7 608.6L499.7 627.6L496.1 627.6L496.1 638.3L468.0 639.1L458.9 640.0L458.1 651.5M468.0 614.4L463.9 620.2L465.5 628.4L468.0 633.4L464.7 636.7L458.9 640.0M499.7 627.6L519.2 626.8L520.0 623.5L536.0 623.5M503.0 628.4L503.0 670.0M536.0 628.4L532.4 635.0L529.1 643.3L525.8 651.5L520.8 663.1L520.8 670.0M469.7 607.8L476.3 608.6M530.7 580.6L536.0 581.4M545.9 536.0L546.7 548.4L557.5 549.2L572.3 548.4L575.6 547.6L607.0 547.9M572.3 536.0L573.1 542.6L575.6 547.6M607.0 536.0L606.6 557.5L606.1 582.2L610.3 584.7L625.1 585.2L638.3 584.2M558.3 549.2L558.3 565.7L566.5 565.7L565.7 580.6M537.7 565.7L558.3 565.7M537.7 565.7L537.7 580.6M536.0 580.9L578.9 581.4L605.3 580.9M593.8 549.2L588.8 555.8L580.6 560.8L577.3 569.0L570.7 574.0L568.2 580.6M607.0 558.3L628.4 558.3L641.6 559.1M631.7 536.0L631.7 555.8M641.6 559.1L641.6 569.0L638.3 580.6L638.3 584.2L648.2 587.2L651.5 585.5M649.9 542.6L654.8 547.6L670.0 546.7M654.8 547.6L648.2 559.1L653.2 565.7L658.1 575.6L658.9 583.9L670.0 585.5M550.9 582.2L550.0 597.1M578.9 581.9L578.1 615.2M597.1 581.9L597.9 592.1L601.2 597.1L601.2 616.5M625.6 585.5L625.6 617.7M648.2 587.2L649.9 597.1L654.8 602.0L648.2 605.3L644.9 610.3L651.5 616.9L654.8 620.2M583.0 616.9L581.4 625.1L577.3 630.1L575.6 634.2M605.3 618.5L607.0 628.4L606.1 635.0M635.8 620.2L635.0 626.8L628.4 630.9L626.8 636.7M660.6 621.8L663.1 633.4L666.4 641.6L668.0 644.9M668.0 585.5L666.4 590.5L670.0 592.9M536.0 625.9L541.0 627.6L548.4 630.9L549.2 636.7L554.2 640.0L555.0 645.7L552.5 651.5L555.8 658.1L557.5 670.0M555.0 641.6L565.7 637.5L575.6 635.0M552.5 649.9L585.5 649.9L588.8 653.2L600.4 653.5L600.4 670.0M600.4 653.5L601.2 638.3L605.3 635.0M626.8 636.7L623.5 641.6L620.2 646.6L622.6 649.9L644.9 650.2L645.7 654.8L670.0 654.5M622.6 649.9L616.9 653.2L611.9 659.8L608.6 668.0M668.0 644.9L664.7 649.9L661.4 654.8L663.1 670.0M654.0 654.8L654.0 670.0M676.6 536.0L675.0 542.6L670.0 547.6M670.0 550.9L683.2 551.7L693.1 555.0L708.0 556.6L709.6 545.9L719.5 546.7L724.5 551.7L732.7 546.7L737.7 542.6L732.7 536.0M708.0 536.0L710.4 541.0L709.6 545.9M737.7 542.6L745.1 545.9L750.0 546.7L751.7 555.8L755.8 561.6L750.9 564.1L745.9 569.0L741.0 569.8L732.7 567.4L726.9 560.8L724.5 551.7M745.1 536.0L745.1 545.9M708.0 556.6L708.0 562.4L703.0 564.1L703.8 570.7L708.0 578.1L709.6 583.9L717.9 591.3L718.7 603.7L722.8 605.3L723.6 623.5M677.4 572.3L704.7 572.0M675.8 557.5L677.4 564.1L677.4 574.8L670.0 575.6M682.9 573.1L682.9 599.5M670.0 592.1L678.3 592.9L679.9 599.5L671.7 603.7L670.8 615.2L670.0 618.5M679.9 599.5L686.5 601.2L691.5 603.7L696.4 611.1L710.4 612.7L711.3 622.6M741.0 569.8L739.3 577.3L744.3 585.5L749.2 586.3L750.9 582.2L759.1 583.9L762.4 585.5L762.4 593.8L762.4 602.0M723.6 587.2L749.2 586.3M722.8 605.3L742.6 607.0L739.3 621.8M751.7 555.8L764.1 557.5L774.0 558.3L783.9 547.6L782.2 542.6L788.8 536.0M774.0 558.3L772.3 572.3L778.9 576.4L785.5 577.3M762.4 585.5L769.0 580.6L775.6 575.6M783.9 549.2L788.8 555.8L792.9 557.5M699.7 625.9L703.0 633.4L706.3 641.6L699.7 648.2L696.4 651.5M720.3 625.9L720.3 654.0M670.0 638.3L676.6 640.0L686.5 639.1M752.5 646.6L752.5 670.0M752.5 651.5L769.0 638.3L777.3 628.4L780.6 625.9M695.6 654.0L695.6 670.0M720.3 664.7L752.5 664.4M752.5 660.6L772.3 659.8M785.5 536.0L792.1 541.0L796.2 542.6M11.6 670.0L12.4 678.3L11.6 686.5L13.2 691.5M39.6 684.0L33.0 689.8L24.8 696.4M46.2 682.4L52.8 681.6L66.0 680.7L69.3 675.0L77.6 673.3L89.1 671.7L90.8 670.0M66.0 680.7L69.3 686.5L72.6 693.1L77.6 696.4M89.1 671.7L92.4 679.9L95.7 686.5L107.3 684.9L122.1 686.5L134.0 685.7M95.7 686.5L92.4 694.8L87.5 701.4L79.2 708.0L71.0 712.9L66.0 719.5M87.5 701.4L99.0 698.1L102.3 703.0L107.3 709.6L115.5 717.9L122.1 726.1L127.1 736.0M107.3 709.6L112.2 706.3L122.1 708.0L134.0 712.9M108.9 670.0L110.6 678.3L107.3 684.9M118.8 675.0L125.4 674.1L130.4 678.3L134.0 678.3M139.0 670.0L139.8 684.9L137.3 689.8M150.5 680.7L158.8 686.5L167.0 684.9L165.4 689.8M155.5 689.8L155.5 699.7L158.8 711.3L165.4 719.5M158.8 686.5L168.7 694.8L178.6 699.7L183.5 703.0M520.8 670.0L524.1 675.0L529.1 678.3L529.9 686.5L529.1 694.8L524.1 698.1L517.5 703.0M536.0 676.6L557.5 676.3M557.5 670.0L564.1 676.6L570.7 678.3M653.2 670.0L652.3 679.9L653.2 686.5L654.8 693.1L670.0 693.9M654.8 693.9L654.8 701.4L652.3 709.6M670.0 693.1L686.5 692.8L685.7 699.7L684.0 708.0L683.2 713.7L678.3 727.8L673.3 737.7M683.2 713.7L694.8 714.6L706.3 717.0L713.7 718.7L713.7 722.8L724.5 723.6L739.3 723.6M694.8 670.0L696.4 678.3L686.5 686.5L685.7 692.8M696.4 681.6L703.0 689.8L708.0 691.5L712.9 686.5L714.6 683.2M706.3 692.3L706.3 717.0M714.6 683.2L724.5 684.0L732.7 689.8L742.6 691.5L747.6 694.8L750.9 701.4M724.5 684.0L732.7 679.9L739.3 673.3L741.8 670.0M751.7 670.0L751.2 699.7L750.9 719.5L749.2 726.1L742.6 728.6L739.3 726.1M751.2 701.4L759.9 699.7L762.4 694.8L769.0 693.1L777.3 691.5L783.9 691.5M750.9 722.8L759.1 720.3L765.7 721.2L770.7 724.5L774.0 731.1L777.3 732.7M724.8 723.6L724.8 746.7L715.4 747.2L715.4 761.6L717.9 761.6M700.5 763.2L709.6 764.9L717.9 761.6L726.1 764.9L732.7 769.8L752.5 770.3L780.6 769.8L780.6 752.5M732.7 769.8L739.3 777.3L742.6 783.9M758.3 770.7L758.3 785.5M791.3 711.3L800.0 711.3M791.3 711.3L792.1 724.5L795.4 731.1L800.0 732.7M790.5 749.2L793.8 757.5L800.0 762.4M670.0 675.0L676.6 675.8L679.9 673.3L681.6 670.0M351.0 356.5L354.7 355.9L357.2 358.4L359.6 363.3L358.4 366.4L360.9 368.2L363.3 365.8L368.2 363.3L367.0 358.4L370.7 355.9L376.9 353.5L379.3 351.0M358.4 366.4L362.1 371.9L367.0 377.5L370.7 381.8L373.2 384.9L376.9 387.9L378.7 386.1L381.8 388.6M381.8 388.6L381.2 394.1L384.9 396.6L386.1 400.3L387.9 403.3L392.3 405.2L392.9 404.0L402.7 404.2L412.6 404.2L416.3 407.0L418.1 408.6M392.9 404.6L392.3 424.3L381.8 424.9L381.2 439.7L380.6 444.6L377.5 451.0M359.6 399.0L359.0 408.9L352.2 410.1L351.6 421.2L359.0 421.8L359.6 424.9L370.7 425.5L381.2 424.9M418.1 408.3L419.3 403.3L422.4 399.0L421.2 396.0L419.3 393.5L422.4 389.2L425.5 386.7L429.8 380.6L431.7 377.5L431.0 375.6M421.8 401.5L444.6 401.2L451.0 401.2M444.6 401.2L445.2 392.9L451.0 390.4M405.2 436.6L412.6 436.2L426.1 436.0L426.4 432.3L432.3 431.7L451.0 431.3M426.1 436.0L426.4 451.0M387.9 439.7L388.6 442.1L390.4 451.0M381.2 439.7L387.9 440.3L405.2 439.7L405.2 436.6M420.0 362.1L421.2 364.5L429.2 365.2L429.8 369.5L431.0 375.6M417.5 351.0L418.7 354.7L421.8 357.2L420.0 362.1L415.0 363.3M443.4 351.0L444.6 358.4M34.7 134.0L35.5 134.0M59.7 134.0L58.6 134.0M163.4 134.0L163.7 134.0M402.0 49.5L402.0 52.8M340.6 134.0L343.1 134.0M536.0 61.1L536.0 57.8M536.0 92.4L536.0 91.6M670.0 49.5L668.0 47.9M575.6 134.0L578.9 134.0M626.8 134.0L628.4 134.0M670.0 112.2L670.0 115.5M268.0 198.4L268.0 197.5M212.9 268.0L215.7 268.0M268.0 253.1L268.0 252.8M255.3 268.0L254.5 267.3M141.4 268.0L143.9 268.0M283.7 268.0L284.5 268.0M348.9 268.0L345.6 268.0M536.0 165.4L536.0 163.7M536.0 203.3L536.0 206.6M446.6 266.8L446.6 268.0M670.0 185.2L670.0 188.5M590.5 266.0L592.1 268.0M615.2 268.0L616.9 268.0M51.5 402.0L51.2 402.0M108.1 402.0L110.6 402.0M92.4 400.8L92.4 402.0M268.0 313.4L268.0 312.6M268.0 362.9L268.0 360.4M134.0 381.9L134.0 383.5M247.9 402.0L248.7 402.0M268.0 279.6L268.8 279.6M402.0 294.1L402.0 294.4M402.0 335.7L402.0 336.5M536.0 311.2L536.0 313.4M536.0 286.2L536.0 285.3M483.7 402.0L482.9 400.8M536.0 373.6L536.0 370.3M567.4 402.0L566.5 402.0M621.8 402.0L625.1 402.0M736.0 402.0L733.5 402.0M134.0 454.8L134.0 455.1M112.2 534.8L112.2 536.0M268.0 478.7L268.0 479.6M268.0 510.9L268.0 510.1M178.6 536.0L181.9 536.0M204.6 536.0L205.0 536.0M303.5 536.0L306.0 536.0M402.0 501.8L402.0 502.3M372.8 536.0L372.0 536.0M446.2 536.0L446.6 536.0M536.0 445.7L536.0 446.6M473.8 534.0L473.8 536.0M605.3 536.0L607.0 536.0M670.0 501.0L670.0 502.7M670.0 409.4L670.0 410.3M731.1 536.0L732.7 536.0M745.6 536.0L745.1 536.0M708.8 536.0L708.0 536.0M134.0 557.1L134.0 557.5M268.0 588.5L268.0 588.8M268.0 612.2L268.0 612.7M141.4 670.0L139.0 670.0M400.8 572.3L402.0 571.5M536.0 623.5L536.0 625.9M536.0 581.4L536.0 580.9M670.0 546.7L670.0 547.6M670.0 585.5L668.0 585.5M670.0 592.9L670.0 592.1M654.0 670.0L653.2 670.0M752.5 670.0L751.7 670.0M695.6 670.0L694.8 670.0M785.5 536.0L788.8 536.0M90.8 670.0L89.1 671.7M670.0 693.9L670.0 693.1" fill="none" stroke="#626262" stroke-width="0.99"/><path d="M175.3 0.0L180.2 5.0L186.8 14.0L191.8 26.4L194.2 36.3L194.7 49.5L194.7 66.0L194.2 85.8L190.1 95.7L182.7 104.8L181.9 115.5L179.4 123.8L177.7 134.0M234.7 0.0L229.7 5.8L223.9 12.4L222.3 19.8L222.3 33.0L220.6 42.9L218.2 52.8L214.9 57.8L208.3 62.4L200.0 63.5L194.7 66.0M234.7 0.0L241.3 7.4L242.9 14.9L249.5 22.3L255.3 29.7L257.8 38.0L257.8 45.4L261.9 51.2L268.0 54.5M268.0 54.1L279.6 54.1L283.7 55.3L287.8 50.8L292.8 48.2L299.4 47.5L305.1 48.2L309.3 52.0L315.9 56.1L322.5 59.4L329.1 65.2L334.0 70.1L342.3 75.1L348.9 80.9L357.1 85.0L362.1 90.8L367.0 96.5L375.3 102.3L381.9 107.3L388.5 112.2L395.1 114.7L400.0 119.6L402.0 122.1M402.0 94.9L395.1 93.2L388.5 93.7L381.9 97.4L375.3 103.1L368.7 112.2L363.7 120.5L362.1 128.7L362.1 134.0M402.0 125.4L398.4 127.1L396.7 134.0M467.2 0.0L466.4 9.9L464.7 23.1L462.2 34.7L458.1 42.1L449.9 48.7L438.3 52.8L428.4 53.6L425.9 59.4L422.6 69.3L421.8 74.3L417.7 82.5L413.6 90.8L409.4 97.4L404.5 105.6L402.8 112.2L405.3 118.8M402.0 94.9L410.3 96.0L421.8 100.7L429.2 105.6L430.1 115.5L431.7 122.1L429.2 130.4L426.8 134.0M402.0 128.7L418.5 127.1L435.0 126.2L444.9 127.1L454.8 127.9L464.7 127.1L474.6 132.0L481.2 132.8L487.8 130.4L501.0 130.4L509.3 132.0L514.2 134.0M582.5 0.0L582.2 8.3L580.6 16.5L583.9 24.8L588.0 31.4L593.8 35.5L597.9 40.4L598.7 49.5L597.1 57.8L594.6 66.0L593.4 72.6L594.6 79.2L597.9 84.2L598.7 89.9L595.4 94.1L588.8 99.0L584.7 104.0L588.8 112.2L590.5 117.2L595.4 122.1L600.4 127.1L604.5 134.0M670.0 126.2L661.4 128.7L656.5 134.0M800.0 66.0L795.4 67.7L785.5 71.0L777.3 73.4L765.7 75.9L755.8 80.9L747.6 85.8L741.0 87.5L736.0 90.4L727.8 95.7L719.5 99.0L709.6 106.4L703.0 110.6L694.8 113.0L686.5 118.0L678.3 122.9L670.0 125.7M0.0 251.5L9.9 249.5L23.1 250.3L33.0 249.5L46.2 248.2L59.4 245.4L71.0 240.4L82.5 237.1L92.4 233.0L102.3 228.4L106.4 229.7L112.2 224.4L120.5 220.6L130.4 218.5L134.0 218.5M176.1 134.0L174.4 136.5L170.3 140.6L169.5 149.7L163.7 158.8L157.1 168.7L152.2 176.9L145.6 186.8L139.8 196.7L139.8 201.7L143.1 209.9L145.6 216.5L152.2 219.0L157.9 219.8M134.0 219.8L145.6 218.2L153.8 219.0M154.6 219.0L158.8 215.7L165.4 215.7L169.5 219.8L169.0 224.4L167.0 225.6L154.6 225.6L154.6 219.0M169.5 217.3L176.9 214.0L186.8 207.4L191.8 203.3L200.0 199.2L206.6 195.9L213.2 190.9L214.9 186.8L219.8 182.7L229.7 179.4L236.3 175.3L246.2 172.8L256.1 170.3L262.7 167.8L268.0 165.4M158.4 225.6L160.4 236.3L162.1 247.9L163.4 257.8L163.7 268.0M268.0 165.4L277.9 162.9L287.8 160.4L296.9 159.6L306.0 155.5L314.2 154.6L322.5 153.8L329.1 154.6L337.3 150.5L345.6 144.7L353.8 141.9L362.1 141.4L370.3 138.1L376.9 135.7L383.5 136.5L388.5 134.0M360.4 134.0L361.2 138.1L363.7 142.3L367.0 147.2L372.0 152.2L376.9 156.3L383.5 159.1L390.1 158.8L395.9 158.8L402.0 159.1M402.0 134.0L398.4 140.6L396.7 150.5L395.9 158.8L392.6 165.4L390.9 176.9L391.4 188.5L392.6 198.4L391.8 208.3L391.8 219.8L392.1 233.0L390.1 241.3L387.6 249.5L388.5 259.4L390.1 268.0M405.3 134.0L410.3 140.6L416.9 147.2L422.6 153.0L428.4 160.4L435.0 170.3L439.1 176.1L440.0 181.0L446.6 185.2L453.2 190.9L459.8 199.2L464.7 205.0L467.2 209.9L471.3 213.2L474.6 219.8L477.1 225.6L479.6 228.9L484.5 228.1L491.1 230.5L496.1 233.3L501.0 233.8L504.3 229.7L508.4 228.9L512.6 230.5L516.7 232.2M402.0 157.1L408.6 156.3L415.2 154.6L422.6 153.0L425.1 143.9L425.9 137.3L427.6 134.0M498.5 234.7L494.4 241.3L491.9 249.5L491.1 257.8L486.2 266.0L484.5 268.0M536.0 219.0L530.7 220.6L524.1 225.6L517.5 231.4L519.2 236.3L524.1 240.4L529.9 244.6L530.7 252.8L532.4 261.1L534.0 268.0M514.2 134.0L520.8 138.1L527.4 140.6L532.4 145.6L536.0 148.0M536.0 148.0L544.3 153.0L554.2 151.8L560.8 151.3L569.0 154.6L577.3 155.1L587.2 153.8L597.1 150.5L605.3 148.9L608.6 146.4L612.7 142.3L615.2 141.4L621.8 142.3L628.4 143.6L636.7 143.9L643.3 141.4L649.9 139.0L654.0 136.5L654.8 134.0M587.2 154.6L582.2 160.4L575.6 167.0L571.5 173.6L567.4 179.4L560.8 186.8L554.2 195.1L550.0 200.0L550.0 203.3L545.9 205.0L542.6 209.9L539.3 214.9L536.0 217.3M604.5 134.0L606.1 139.0L608.6 142.3L613.6 140.6L616.9 141.4M654.0 136.5L658.1 140.6L661.4 146.4L665.5 148.9L666.4 155.5L668.0 159.6L670.0 159.6M670.0 159.6L675.0 162.9L678.3 167.0L679.9 173.6L680.7 178.6L684.9 181.9L689.8 183.5L696.4 184.3L703.0 182.7L709.6 182.7L717.9 181.9L724.5 179.4L731.9 177.7L739.3 176.6L747.6 174.9L755.8 175.3L760.8 172.0L769.0 169.5L777.3 168.7L785.5 167.8L792.1 167.0L800.0 169.5M709.6 182.7L713.7 190.1L716.2 196.7L721.2 203.3L726.1 208.3L729.4 210.7L737.7 209.9L741.0 214.9L745.9 221.5L750.9 228.1L754.2 234.7L755.8 246.2L758.3 254.5L760.8 262.7L762.4 268.0M800.0 217.3L792.1 220.6L785.5 223.1L777.3 224.8L769.0 228.1L762.4 230.5L754.2 234.7L749.2 238.0L742.6 241.3L736.0 244.6L732.7 247.9L726.1 250.3L719.5 251.2L716.2 257.8L711.3 264.4L706.3 268.0M732.7 247.9L734.4 254.5L739.3 261.1L745.9 266.0L749.2 268.0M163.4 268.0L166.2 274.6L167.8 282.9L166.2 292.8L165.4 306.0L167.8 315.9L170.3 324.1L172.0 334.0L172.0 343.9L175.3 352.2L176.9 362.1L177.2 375.3L175.3 385.2L172.0 393.4L167.8 402.0M390.1 270.5L390.9 281.2L390.9 289.5L390.1 296.1L392.6 306.0L393.4 317.5L392.6 325.8L395.1 334.0L395.9 342.3L395.4 353.8M334.0 402.0L337.3 396.7L345.6 394.7L355.5 395.1M485.3 268.0L481.2 273.0L478.7 279.6L473.0 287.8L466.4 296.9L460.6 304.3L458.1 311.7L451.5 319.2L445.7 325.8L436.7 333.2L428.4 339.8L420.2 343.9L415.2 350.5L409.4 356.3M451.5 358.4L458.9 358.8L468.0 357.9L476.3 355.5L487.8 355.1L497.7 352.2L506.0 349.7L517.5 348.9L527.4 347.2L536.0 346.4M536.8 268.0L537.7 277.9L538.5 286.2L542.6 292.8L549.2 301.0L550.0 307.6L552.5 312.6L560.8 315.0L563.2 319.2L566.5 325.8L571.5 331.5L574.0 337.3L576.4 343.9M578.1 287.8L575.6 292.8L571.5 297.7L569.0 304.3L566.5 310.9L564.1 317.5L564.9 321.6M670.0 282.9L664.7 286.2L658.1 290.3L649.9 296.1L643.3 301.8L635.0 306.0L628.4 310.1L618.5 312.6L608.6 315.9L602.0 318.3L597.1 324.1L592.1 328.2L587.2 330.4L582.2 335.7L577.3 339.0M571.5 331.5L575.6 329.1L587.2 329.9L588.0 339.0L588.8 345.6L585.5 349.7L577.3 350.5L575.6 355.5L569.8 353.8L569.0 343.9L569.8 335.7L571.5 331.5M536.0 345.6L544.3 345.2L552.5 343.1L560.8 341.4L569.0 342.3L576.4 343.9M576.4 343.9L585.5 346.4L599.5 347.2L605.3 352.2L610.3 354.6L621.8 356.3L633.4 357.1L643.3 359.6L654.8 362.1L664.7 362.1L670.0 361.2M575.6 355.5L582.2 358.8L588.8 364.5L593.8 372.8L597.1 380.2L598.7 386.8L603.7 396.7L607.0 402.0M575.6 350.5L569.0 357.1L560.8 362.9L552.5 370.3L549.2 376.9L546.7 386.8L541.0 395.1L537.7 402.0M576.4 343.9L576.4 355.5M576.4 339.0L580.6 345.6L575.6 350.5M580.6 352.2L585.5 357.1L585.5 362.1M670.0 282.0L678.3 277.1L686.5 275.4L696.4 272.1L705.5 268.8L706.3 268.0M670.0 361.7L679.9 362.4L691.5 365.4L703.0 366.2L711.3 365.4L719.5 364.5L729.4 366.2L739.3 367.3L749.2 366.2L754.2 362.9L762.4 357.9L772.3 353.5L782.2 349.7L788.8 345.6L794.6 339.0L800.0 334.0M751.7 268.0L754.2 272.1L762.4 274.6L769.0 279.6L775.6 283.7L782.2 291.1L790.5 297.7L800.0 302.7M763.2 268.0L764.1 274.6M0.0 454.8L9.9 455.6L19.8 456.5L33.0 458.1L46.2 459.8L56.1 460.6L66.0 462.7L74.3 465.5L82.5 469.7L89.9 471.0L97.4 468.0L107.3 467.2L118.8 468.0L128.7 467.2L134.0 468.0M134.0 496.1L130.4 502.7L127.9 514.2L126.2 525.8L125.4 536.0M167.8 402.0L164.5 408.6L162.1 414.4L157.9 419.3L155.5 425.1L156.3 435.0L154.6 444.9L150.5 454.8L148.9 463.1L148.0 471.3L145.6 475.4L142.3 481.2L139.0 489.5L134.0 496.1M134.0 469.3L139.0 473.3L143.9 473.8L147.2 474.6L155.5 475.4L164.5 474.6L173.6 473.3L181.9 472.6L190.1 470.5L193.4 469.3L200.0 470.0L211.6 470.0L224.8 468.8L236.3 468.5L247.9 468.0L252.8 468.8L259.4 465.5L268.0 463.9M141.4 473.0L141.4 468.0L145.6 463.9L148.9 463.1M252.8 468.8L248.7 473.0L244.6 482.9L242.9 491.1L239.6 497.7L234.7 505.1L230.5 510.9L230.5 520.0L226.4 524.9L223.1 529.1L218.2 536.0M268.0 463.4L274.6 462.2L281.2 457.3L287.8 451.5L294.4 441.6L301.0 434.2L309.3 425.9L317.5 418.5L324.1 411.1L330.7 404.5L334.0 402.0M402.0 526.6L398.4 532.4L395.9 536.0M422.6 448.2L426.8 454.8L430.9 460.6L433.4 465.5L432.5 473.0L427.6 478.7L424.3 487.8L420.2 496.1L417.7 502.7L411.9 509.3L407.0 517.5L402.0 524.9M433.4 465.5L441.6 467.2L454.8 466.0L463.1 461.4L471.3 459.4L483.7 456.5L494.4 449.9L504.3 443.3L509.3 435.0L515.9 425.1L522.5 416.9L529.1 409.4L536.0 406.1M605.3 402.0L611.9 407.0L618.5 411.9L621.0 416.0L625.1 421.8L626.8 428.4L625.9 435.0L625.1 448.2L624.3 456.5L623.5 464.7L624.3 473.0L625.1 481.2L623.5 491.1L624.3 501.0L625.9 509.3L628.4 517.5L633.4 525.8L636.7 532.4L639.1 536.0M621.0 416.0L628.4 418.5L633.4 423.5L639.1 429.2L640.0 433.4L644.9 439.1L654.8 444.9L663.1 449.0L670.0 451.5M633.4 423.5L631.7 428.4L627.6 430.9M536.0 404.5L538.5 402.0M670.0 451.5L678.3 454.0L688.2 456.5L698.1 458.9L703.0 460.6L712.9 460.6L724.5 462.2L736.0 464.7L742.6 466.0L752.5 466.4L759.1 469.7L767.4 473.0L775.6 476.3L783.9 478.7L792.1 480.9L800.0 487.0M800.0 530.7L797.9 536.0M124.1 536.0L124.6 552.5L123.8 569.0L122.9 582.2L121.3 593.8L119.6 607.0L119.6 618.5L122.1 628.4L122.9 635.0M80.9 639.1L87.5 636.7L94.1 635.3L105.6 635.5L117.2 635.0L125.4 634.7L134.0 634.7M0.0 654.8L9.9 654.5L16.5 650.7L26.4 648.2L36.3 644.9L47.9 641.6L59.4 638.0L67.7 637.5L74.3 639.1L80.9 640.0L84.2 645.7L85.8 653.2L90.8 658.9L99.0 663.9L107.3 666.4L118.8 668.0L134.0 669.3M0.0 610.3L3.3 612.7L6.6 618.5L7.4 626.8L5.8 635.0L6.6 643.3L9.1 651.5L9.9 654.5M122.9 635.0L127.1 639.1L129.5 644.9L130.4 651.5L128.7 658.1L126.2 664.7L126.2 670.0M217.3 536.0L213.2 541.0L210.7 545.9L209.9 555.8L210.2 566.5L207.4 575.6L204.1 585.5L200.0 593.8L196.7 602.0L195.1 610.3L190.9 618.5L186.8 626.8L183.5 635.0L180.2 641.6L178.9 649.9M134.0 634.7L140.6 634.7L147.2 637.0L155.5 640.8L163.7 644.9L172.0 649.0L178.9 649.9L186.8 649.9L196.7 647.4L205.0 644.1L211.6 641.6L223.1 639.1L236.3 636.3L246.2 637.0L256.1 638.3L262.7 638.3L268.0 638.6M178.9 649.9L176.9 656.5L172.0 663.1L167.0 670.0M394.2 536.0L390.1 542.6L385.2 549.2L380.2 555.8L373.6 559.1L367.0 564.1L360.4 569.0L353.8 574.0L347.2 578.1L340.6 582.2L334.0 586.3L327.4 590.5L320.8 592.9L314.2 593.8L307.6 597.1L302.7 601.2L301.0 607.0L299.7 613.6L299.4 620.2M268.0 636.7L274.6 635.8L282.9 633.4L289.5 630.1L296.1 625.1L299.4 621.8L305.1 617.7L310.9 617.7L320.8 618.5L330.7 620.2L339.0 621.8L343.9 625.1L352.2 626.4L357.1 629.2L361.2 631.7L368.7 632.5L375.3 629.2L381.9 625.9L386.8 621.0L393.4 617.7L402.0 615.2M402.0 614.4L411.9 612.7L421.8 613.2L431.7 612.2L438.3 610.3L446.6 615.2L458.1 615.5L464.7 611.9L471.3 609.4L484.5 609.4L494.4 611.1L509.3 609.4L517.5 613.6L527.4 618.5L536.0 620.5M536.0 620.5L542.6 621.8L550.9 623.5L557.5 627.6L562.4 630.1L569.0 630.9L575.6 634.2L583.9 633.7L588.8 632.0L595.4 634.2L605.3 634.2L613.6 635.8L621.8 635.8L628.4 638.0L638.3 639.6L646.6 638.6L654.8 642.4L664.7 644.9L670.0 646.2M639.1 536.0L641.6 542.6L643.3 550.9L644.9 559.1L646.6 567.4L649.0 577.3L651.5 585.5L653.2 593.8L656.5 603.7L661.4 613.6L666.4 620.2L670.0 622.6M796.2 536.0L796.7 544.3L795.7 552.5L792.9 560.8L790.5 569.0L785.5 577.3L780.6 583.9L778.9 592.1L779.7 602.0L778.9 613.6L781.4 621.8L782.2 631.7L778.9 638.3L779.7 648.2L782.2 654.8L785.5 661.4L788.8 670.0M670.0 646.2L676.6 646.6L683.2 648.2L689.8 650.7L696.4 652.3L703.0 654.8L712.9 655.1L722.8 654.0L732.7 655.6L742.6 654.5L752.5 652.3L762.4 650.7L772.3 649.5L779.7 648.5M670.0 622.6L673.3 628.4L678.3 633.4L686.5 638.3L693.1 646.6L698.1 653.2L703.0 659.8L708.0 670.0M779.7 636.7L775.6 637.5L772.3 643.3L772.3 651.5L773.1 658.1L777.3 661.4L785.5 662.2L792.1 663.9M128.7 670.0L134.0 673.3M134.0 673.3L139.0 676.6L150.5 677.4L155.5 679.1L160.4 675.8L164.5 671.7L166.2 670.0M150.5 677.4L152.2 680.7L155.5 679.1M707.1 670.0L710.4 676.6L713.7 684.9L716.2 694.8L721.2 703.0L726.9 712.9L733.5 722.8L737.7 732.7L741.0 744.3L741.8 759.1L745.1 769.0L747.6 775.6L748.9 785.5M792.1 670.0L793.8 676.6L797.9 681.6L799.5 686.5L800.0 691.5M395.3 351.0L396.0 355.9L397.2 362.1L398.4 367.0L399.0 373.8L399.6 375.0L397.8 383.0L397.2 389.2L398.4 393.5L401.5 397.8L402.7 404.0L404.0 408.9L407.7 415.0L411.3 420.0L413.8 424.9L415.7 431.0L418.1 436.0L420.6 442.1L423.0 451.0M351.0 395.3L358.4 393.5L364.5 391.6L370.7 389.2L376.9 384.9L381.8 380.6L384.3 374.4L386.7 369.5L391.6 364.5L396.6 362.7M381.8 380.6L390.4 379.9L396.6 376.9L399.6 375.0M399.6 375.0L401.5 369.5L405.2 364.5L407.7 360.2L408.9 355.9L413.8 352.2L415.7 351.0M407.7 360.2L415.0 359.6L424.9 357.8L434.7 356.5L444.6 356.5L451.0 357.2M177.7 134.0L176.1 134.0M268.0 54.5L268.0 54.1M402.0 122.1L402.0 125.4M362.1 134.0L360.4 134.0M426.8 134.0L427.6 134.0M670.0 126.2L670.0 125.7M656.5 134.0L654.8 134.0M134.0 218.5L134.0 219.8M163.7 268.0L163.4 268.0M402.0 159.1L402.0 157.1M402.0 134.0L405.3 134.0M484.5 268.0L485.3 268.0M536.0 219.0L536.0 217.3M534.0 268.0L536.8 268.0M762.4 268.0L763.2 268.0M749.2 268.0L751.7 268.0M536.0 346.4L536.0 345.6M670.0 282.9L670.0 282.0M670.0 361.2L670.0 361.7M607.0 402.0L605.3 402.0M537.7 402.0L538.5 402.0M134.0 468.0L134.0 469.3M125.4 536.0L124.1 536.0M268.0 463.9L268.0 463.4M218.2 536.0L217.3 536.0M402.0 526.6L402.0 524.9M395.9 536.0L394.2 536.0M536.0 406.1L536.0 404.5M797.9 536.0L796.2 536.0M134.0 669.3L134.0 673.3M126.2 670.0L128.7 670.0M268.0 638.6L268.0 636.7M167.0 670.0L166.2 670.0M402.0 615.2L402.0 614.4M788.8 670.0L792.1 670.0M708.0 670.0L707.1 670.0" fill="none" stroke="#816c04" stroke-width="0.99"/><path d="M0.0 99.3L134.0 99.3M134.0 99.3L148.9 99.3L150.2 105.6L154.6 108.1L155.1 113.9L153.0 118.8L149.7 122.1L143.9 127.1L139.0 132.0L137.6 134.0M199.2 0.0L195.9 2.5L195.9 5.8L199.2 10.7L202.0 16.5L202.0 23.1L197.5 24.8L195.4 28.1L197.5 31.4L200.0 33.0L201.7 39.6L205.3 46.2L206.6 49.5L211.6 49.5L214.9 51.2L215.7 53.1L213.2 55.3L210.2 52.8L209.1 49.5M214.9 51.2L219.8 49.5L220.6 53.6L225.6 56.1L226.4 61.1L223.9 66.0L220.6 69.3L220.6 72.6L224.8 74.3L223.9 77.6L219.8 79.2L220.6 82.5L222.8 85.0L219.8 89.1L218.2 92.4L214.9 93.2L211.6 89.1L209.1 85.8L206.6 87.5L205.0 92.4L203.3 97.4L201.7 101.0L199.2 101.5L197.5 99.0L199.2 95.7L197.5 92.1L194.2 91.1L191.4 93.2L191.8 96.5L194.2 98.7L196.7 99.0L196.4 100.7L194.2 105.6L195.1 108.9L190.9 113.0L188.5 114.7L190.1 117.2L194.2 118.8L192.6 121.3L186.8 120.5L182.7 122.1L184.3 125.4L188.5 127.9L190.1 132.0L186.8 134.0M219.8 49.5L223.9 42.9L228.1 38.0L233.0 33.8L238.8 33.8L242.9 35.5L249.5 38.8L256.1 42.1L262.7 43.7L268.0 47.9M203.3 98.5L258.6 98.5L258.6 99.0L268.0 99.0M268.0 47.9L273.0 47.9L276.3 43.7L277.1 38.8L274.6 34.7L271.3 30.5L270.5 26.4L273.0 21.5L274.6 17.3L279.6 16.5L284.5 15.7L289.5 13.2L297.7 12.4L302.7 11.2L303.5 6.6L300.2 3.3L298.5 0.0M268.0 99.0L305.1 99.0L306.8 94.1L305.1 89.1L303.5 82.5L311.7 82.2L319.2 83.3L319.5 86.1L350.5 86.1L396.7 85.5L396.7 84.5L402.0 84.5M402.0 84.5L413.6 84.5L415.2 85.8L438.3 85.8L439.1 86.6L453.2 87.1L477.1 88.0L502.7 88.0L503.5 87.1L522.5 87.5L523.3 88.3L536.0 88.6M536.0 88.6L539.3 89.4L565.7 89.6L566.5 90.4L607.8 90.4L608.6 91.1L629.2 90.8L630.1 89.9L638.3 89.9L639.1 90.4L651.5 89.9L661.4 89.9L670.0 90.4M629.2 90.8L631.7 87.5L638.3 85.0L643.3 83.3L649.9 82.5L654.8 80.0L661.4 77.9L670.0 77.1M670.0 77.1L671.7 71.0L675.0 67.7L683.2 66.0L689.8 63.5L690.6 56.9L694.8 52.8L700.5 50.3L701.4 43.7L708.0 39.6L716.2 35.5L724.5 31.4L731.9 28.1L739.3 21.5L747.6 14.9L754.2 9.1L757.5 6.6M742.6 0.0L745.9 4.1L750.9 5.8L757.5 6.6L760.4 7.4L759.1 9.9L755.8 10.7L757.5 14.9L759.9 17.3L759.9 21.5L764.1 24.8L769.0 28.9L773.1 29.7L775.6 33.0L778.9 35.5L785.5 35.5L792.1 32.2L797.1 30.5L800.0 28.1M670.0 90.4L736.0 90.4L759.1 90.4L760.4 88.8L780.6 88.8L782.2 89.9L788.8 90.4L795.4 91.6L800.0 92.1M780.6 89.1L777.3 93.2L778.1 99.0L775.6 104.0L774.8 109.7L776.4 113.0L772.3 112.2L767.4 112.2L762.4 115.5L759.1 120.5L755.8 127.1L752.5 132.0L749.2 132.8L744.3 132.0L739.3 129.5L732.7 131.2L726.1 132.8M134.0 134.0L132.0 143.2L134.0 143.4M134.0 246.2L130.4 247.9L127.9 244.6L126.2 241.3L123.8 242.9L125.4 247.9L126.2 252.8L122.1 256.1L120.5 249.5L118.8 254.5L118.0 259.4L122.1 260.2L124.6 261.9L120.5 264.4L117.2 261.1L116.3 268.0M134.0 143.4L180.2 143.4M185.2 134.0L182.7 137.3L181.0 142.3L181.0 146.4L185.2 148.9L186.0 152.2L181.9 153.0L177.7 153.8L179.4 157.1L182.7 158.8L178.6 160.4L174.4 163.7L168.7 166.2L164.5 165.4L163.7 169.5L166.2 173.6L169.5 172.8L170.3 175.3L166.2 178.6L163.7 181.9L166.2 183.5L166.2 186.0L162.9 183.5L158.8 183.5L157.1 186.8L157.9 191.8L157.1 197.5L154.6 196.7L153.8 190.9L150.5 191.8L147.2 195.9L148.0 197.5L152.2 195.1L154.6 197.5L151.3 200.0L148.0 205.0L150.5 209.1L153.8 210.7L153.0 214.9L151.3 216.5L153.8 218.2L154.6 220.6L150.5 220.6L147.2 223.1L145.6 228.1L140.6 228.9L137.3 230.5L136.5 233.0L139.8 234.7L141.4 238.0L140.6 242.1L137.3 243.7L134.0 244.6M137.3 232.5L268.0 232.5M268.0 232.5L292.8 232.5L293.6 231.4L329.9 231.4L330.7 232.5L402.0 232.5M293.6 232.5L295.2 236.3L299.4 239.6L301.8 241.3L301.0 249.5L299.4 259.4L299.0 268.0M402.0 232.5L438.3 232.5L439.1 233.3L464.7 233.3L465.5 233.8L536.0 233.5M486.5 233.8L487.8 241.3L490.3 252.8L491.9 262.7L492.4 268.0M536.0 233.5L651.5 233.3L653.2 232.5L670.0 232.5M582.5 233.5L583.0 226.4L583.9 216.5L584.7 211.6L589.6 208.3L591.3 210.2L597.1 209.9L602.0 207.4L603.7 204.1L603.7 200.0L605.0 195.1L607.8 191.8L612.7 188.5L615.2 186.0L621.8 182.7L628.4 181.9L635.0 180.5L641.6 182.2L644.9 180.2L649.9 176.1L654.0 173.6L659.8 172.8L663.1 168.7L666.4 167.0L670.0 164.5M670.0 238.0L666.4 239.6L662.2 242.9L661.4 247.0L657.3 248.7L655.6 252.8L654.8 257.8L656.5 261.1L661.4 264.4L666.4 266.8L670.0 268.0M670.0 164.5L673.3 161.2L678.3 162.1L682.4 162.9L685.7 157.1L687.3 152.2L686.5 148.9L691.5 147.2L694.8 149.7L697.2 146.4L697.2 143.1L700.5 140.6L704.7 138.1L708.8 137.3L711.3 140.6L709.6 143.9L712.9 147.2L717.9 145.6L721.2 141.4L724.5 136.5L726.1 134.0M670.0 232.5L672.5 232.7L676.6 231.4L686.5 227.2L696.4 224.4L699.7 225.6L704.7 220.6L711.3 219.5L717.9 217.3L722.8 215.7L725.3 213.2L726.9 215.7L732.7 214.5L741.0 214.2L752.5 214.9L765.7 215.7L785.5 216.5L800.0 216.8M672.5 233.0L671.7 237.1L670.0 238.3M116.3 268.0L118.8 271.3L118.0 275.4L117.2 279.6L117.5 284.5L113.9 286.2L109.7 287.8L109.7 292.8L107.3 289.5L103.1 288.6L104.0 292.8L104.8 296.1L99.0 296.9L97.4 301.0L93.2 299.4L90.4 300.2L92.4 303.5L97.4 304.3L99.0 306.8L95.7 308.4L91.6 306.8L89.1 309.3L90.8 312.6L94.9 313.4L94.1 317.5L90.8 320.0L85.8 321.6L88.3 324.1L84.2 324.9L79.2 323.3L79.2 325.8L85.8 326.6L82.5 330.7L80.9 334.8L82.5 338.1L86.6 339.8L85.8 342.3L80.9 341.4L75.9 340.6L75.1 344.7L77.6 348.0L82.5 348.9L80.0 351.3L75.1 349.7L71.0 347.2L68.5 349.7L71.0 353.0L75.1 353.8L75.1 357.1L71.0 358.8L68.5 360.4L69.3 363.7L72.6 367.0L75.9 370.3L80.0 369.5L80.9 372.0L78.4 375.3L75.1 376.9L71.8 375.3L68.5 371.1L69.3 367.0L72.6 373.6L76.7 373.6L75.1 378.6L75.1 382.7L77.6 386.8L80.9 385.2L81.7 387.6L78.4 389.3L79.2 394.2L77.6 397.5L72.6 397.5L71.0 400.0L71.8 402.0M298.5 268.0L297.4 279.6L295.2 292.8L293.6 309.3L291.9 325.8L289.5 347.2L287.8 363.7L286.2 383.5L284.5 402.0M492.4 268.0L494.4 277.9L497.7 292.8L501.0 310.9L504.3 330.7L507.6 350.5L510.1 370.3L512.6 386.8L515.0 402.0M670.0 269.7L675.0 275.4L680.7 278.7L688.2 278.2L691.5 282.9L693.1 287.8L697.2 292.8L699.7 298.5L700.5 305.1L704.7 309.3L709.6 315.9L711.3 321.6L714.6 325.8L719.5 329.9L726.1 333.2L731.1 336.5L736.0 342.3L738.5 348.9L741.8 353.8L745.1 357.1L750.9 358.8L754.2 362.9L759.1 367.0L760.8 372.0L759.9 377.7L762.4 381.0L765.7 382.7L767.4 388.5L772.3 391.8L773.1 395.9L777.3 400.0L780.6 402.0M0.0 409.4L72.6 409.4M72.6 402.0L75.9 403.7L76.7 407.0L72.6 409.4L70.1 412.7L70.1 416.9L73.4 419.3L77.6 418.5L80.0 415.2L79.2 411.9L75.9 411.1L80.0 413.6L80.5 418.5L77.6 422.6L74.3 425.1L73.4 430.1L75.9 433.4L80.9 434.2L79.2 437.5L75.1 441.6L75.1 445.7L79.2 446.6L83.3 444.1L85.0 442.4L85.8 444.9L82.5 448.2L78.4 449.9L76.7 453.2L78.4 457.3L82.5 459.8L87.5 460.6L89.9 463.9L90.8 468.0L94.1 465.5L93.2 469.7L89.9 471.3L89.9 473.8L86.6 476.3L85.8 481.2L80.9 479.6L75.9 479.6L72.6 482.9L72.6 487.0L76.7 488.6L81.7 488.6L85.0 486.2L84.2 483.7L81.7 487.0L80.9 491.9L77.6 494.4L79.2 497.7L77.6 500.2L72.6 501.8L71.0 507.6L65.2 511.7L61.9 514.2L60.2 512.6L59.4 517.5L57.8 522.5L62.7 520.0L66.0 520.0L65.2 522.5L59.4 521.6L56.9 524.1L56.1 529.1L54.5 532.4L49.5 530.7L47.5 533.2L49.5 535.3L54.5 534.8L55.3 536.0M284.5 402.0L282.9 415.2L280.4 435.0L278.7 454.8L276.3 476.3L274.6 496.1L273.4 517.5L274.6 536.0M515.0 402.0L516.7 410.3L519.2 420.2L520.0 426.8L523.3 431.7L524.1 440.0L526.6 444.9L529.1 449.9L532.4 456.5L534.0 461.4L532.4 465.5L531.5 469.7L536.0 472.1M536.0 479.6L530.7 482.9L528.2 486.2L527.4 492.8L527.1 497.7M527.1 529.1L527.4 532.4L528.2 536.0M536.0 472.1L539.3 475.4L537.7 479.6L536.0 479.6M780.6 402.0L785.5 404.5L791.3 407.8L792.9 413.6L795.4 418.5L797.9 425.1L798.7 432.5L800.0 435.0M55.3 536.0L52.8 538.5L47.9 541.0L47.0 545.9L49.5 550.0L50.3 553.3L47.0 555.8L43.7 555.0L42.1 552.5L44.6 550.0L47.9 551.7L46.2 555.0L44.6 557.5L47.0 560.8L47.9 563.2L44.6 564.4L37.1 564.9L39.6 569.8L41.3 573.1L38.8 576.4L41.3 579.7L43.2 583.9L41.3 586.3L38.8 588.5M38.8 588.5L134.0 588.5M134.0 588.5L180.2 588.5M180.2 588.5L179.4 593.8L176.9 598.7L174.4 605.3L172.8 610.3L171.6 616.9L172.8 621.8L175.3 627.6L178.6 632.5L183.5 635.8L184.3 641.6L186.0 646.6L187.6 651.5L189.3 658.1L190.9 661.4M274.6 536.0L275.9 555.8L277.1 577.3L277.9 602.0L278.7 621.8L279.2 641.6M338.6 588.8L402.0 588.8M338.6 588.8L339.3 593.8L336.5 597.9L335.7 601.2L339.0 605.3L343.1 609.4L344.7 613.6L350.5 616.0L353.0 618.5L353.5 623.5L351.3 627.6L349.7 630.9L350.5 635.0L353.0 637.5L356.3 636.7L357.1 639.1M402.0 588.5L531.5 588.5M527.4 536.0L528.2 541.0L525.8 549.2L524.1 557.5L523.3 565.7L524.1 571.5L528.2 577.3L529.9 583.9L531.5 588.5L534.0 593.8L534.8 598.7M541.0 613.9L552.5 614.9L577.3 616.0L598.7 616.9L618.5 618.0L635.0 619.3L648.2 620.5L661.4 621.3L670.0 621.8M670.0 621.8L686.5 622.6L703.0 624.3L719.5 625.1L738.5 625.9L737.7 630.1L740.1 635.0L740.1 641.6L742.6 644.6L750.9 644.9L752.2 641.6L752.5 635.0L754.2 628.4L753.3 621.8L751.7 615.2L752.2 608.6L755.8 605.3L759.9 603.3L763.2 604.5L765.7 606.1L772.3 607.8L778.9 611.1L785.5 612.7L792.1 614.4M137.6 134.0L134.0 134.0M186.8 134.0L185.2 134.0M726.1 132.8L726.1 134.0M134.0 246.2L134.0 244.6M299.0 268.0L298.5 268.0M670.0 238.0L670.0 238.3M670.0 268.0L670.0 269.7M71.8 402.0L72.6 402.0M528.2 536.0L527.4 536.0M402.0 588.8L402.0 588.5" fill="none" stroke="#000" stroke-width="0.99"/><path d="M229.0 752.7L235.1 750.2L232.7 747.7L225.3 745.3L222.8 740.4L220.4 737.9L217.9 735.4L213.0 736.7L210.5 733.0L205.6 731.7L200.7 731.1L197.0 730.5L193.3 730.5L195.7 725.6L197.0 720.7L195.7 715.7L198.2 710.8L201.9 707.1L205.6 703.4L210.5 699.7L214.2 697.3L215.4 692.3L216.7 686.2L219.1 681.2L221.6 676.3L220.4 671.4L221.6 664.0L221.6 663.5L212.8 667.2L202.4 667.2L198.7 670.9L197.3 676.1L193.6 679.0L191.3 683.5L189.1 687.9L184.7 689.4L181.0 687.2L179.5 683.5L175.1 683.5L171.4 681.2L170.7 677.5L172.9 674.6L177.3 673.9L180.3 675.3L183.2 670.9L187.6 665.0L192.1 662.0L198.0 661.3L202.4 658.3L206.1 653.9L209.8 650.2L208.3 647.3L206.9 645.3L209.8 644.3L213.5 645.0L215.0 647.3L212.8 649.5L215.7 649.5L223.1 646.5L229.0 643.6L234.2 642.1L234.2 639.4L246.0 639.4L246.8 641.3L251.2 644.3L255.6 646.5L261.5 645.8L266.0 643.6L270.4 645.8L274.8 648.0L277.8 645.8L280.7 643.6L284.0 642.1L286.2 643.4L289.9 644.6L293.6 644.6L294.8 647.7L297.9 647.1L299.7 645.9L300.9 640.9L300.3 633.6L302.2 628.6L300.9 625.6L299.1 624.3L300.3 622.5L302.8 621.9L304.6 618.8L305.9 615.7L307.7 615.7L309.6 617.5L313.3 618.5L314.5 621.2L315.1 627.4L313.9 632.3L315.7 637.3L317.0 640.9L320.7 640.9L321.3 642.8L319.4 644.0L321.9 647.1L325.6 650.8L328.7 651.4L329.3 653.3L331.1 655.7L337.9 653.9L342.8 652.6L350.2 650.8L356.4 648.3L364.0 646.5L368.5 646.5L375.9 645.3L383.3 644.0L390.7 642.8L398.0 641.6L405.4 640.9L412.8 641.6L420.2 642.2L427.6 642.8L434.0 643.7L438.5 646.6L445.9 649.1L453.3 651.6L459.4 654.6L465.6 657.7L471.7 661.4L477.9 665.7L482.8 669.4L487.7 673.1L492.7 677.4L497.6 680.5L504.0 684.2L504.8 686.5L507.3 690.2L509.1 693.9L509.7 698.2L509.1 703.1L509.7 705.0L515.9 704.3L522.0 703.7L527.0 702.5L531.9 701.9L534.3 700.0L535.6 697.0L538.0 695.7L541.1 694.5L543.0 695.7L540.5 698.2L542.3 700.7L547.9 698.2L552.8 695.1L557.7 692.0L562.7 688.3L567.6 685.3L571.3 684.0L574.0 683.2L574.3 680.9L572.5 677.9L576.8 677.3L578.0 673.6L580.5 670.5L583.6 671.1L586.0 668.0L588.5 668.6L590.9 666.8L593.4 670.5L596.5 668.6L600.8 668.6L606.3 668.0L608.2 670.5L611.9 673.6L615.6 676.0L620.5 678.5L625.4 680.9L630.4 684.0L633.4 687.7L635.9 692.6L637.7 697.6L640.2 700.7L643.9 703.7L648.8 705.6L651.3 708.0L650.7 713.0L650.1 717.9L651.3 721.6L654.0 722.8L658.1 724.5L663.1 727.8L666.4 732.7L668.8 739.3L670.0 741.0L672.5 738.5L674.1 742.6L676.6 749.2L679.9 751.7L684.9 750.9L689.8 751.7L694.8 752.5L696.4 757.5L698.9 762.4L700.5 769.0L704.7 774.0L708.0 777.3L707.1 782.2L703.0 783.9L704.7 787.2M0.0 703.6L2.5 702.3L6.2 698.6L12.3 696.8L13.5 692.5L18.5 693.7L23.4 692.5L24.6 696.2L22.2 698.6L20.9 702.3L25.9 700.5L39.4 699.9L40.0 698.6L42.5 699.9L40.6 701.7L38.8 709.7L44.3 709.7L46.2 717.1L45.0 720.2L49.3 719.0L54.2 717.7L55.4 720.2L60.3 720.8L62.8 723.3L64.7 720.8L67.1 725.7L70.2 729.4L70.8 733.1L73.9 735.6L75.7 737.4L80.0 735.0L83.7 735.6L88.7 736.8L91.1 739.3L94.8 741.1L100.0 743.0M155.1 752.1L157.5 747.7L162.5 744.0L168.6 741.0L174.8 739.7L180.9 740.4L184.6 742.8L189.6 746.5L194.5 749.0L199.4 752.4L155.1 752.7ZM349.0 630.5L350.2 634.2L352.1 637.3L355.1 636.6L357.0 639.1L354.5 640.9L351.4 640.9L350.8 644.6L349.0 647.7L345.3 647.1L345.3 644.6L342.8 646.5L344.0 649.6L340.4 650.2L337.9 647.1L339.1 645.9L342.8 644.6L346.5 643.4L349.0 640.9L349.6 637.3L349.0 633.6ZM369.1 625.6L370.9 626.2L373.4 628.0L372.8 629.9L374.6 631.7L376.5 631.7L376.5 636.6L378.3 636.6L379.6 632.3L380.8 628.6L382.6 625.6L384.5 626.2L382.6 629.2L382.6 632.9L385.7 635.4L388.8 636.6L385.7 639.1L382.6 640.3L378.3 640.9L374.6 642.2L370.9 644.0L367.3 645.9L363.6 647.1L360.5 647.1L364.2 644.0L366.6 642.2L368.5 640.3L370.9 638.5L372.2 633.6L370.9 629.9ZM370.9 645.3L378.3 643.4L385.7 642.2L390.7 641.6L390.9 642.4L385.7 643.2L378.3 644.4L371.6 646.1ZM411.4 638.6L413.2 634.9L416.3 637.4L420.0 635.6L422.5 634.3L423.1 631.9L424.9 634.3L426.8 636.8L431.1 635.6L434.8 634.9L439.1 634.3L442.2 632.5L443.4 635.6L446.5 636.2L447.7 639.9L449.0 641.7L447.1 643.6L444.6 641.7L440.9 639.2L437.3 640.5L434.2 641.7L432.3 642.9L428.6 641.7L424.9 640.5L420.0 641.1L416.3 641.7L413.9 641.1ZM468.0 650.9L469.9 653.4L473.0 652.2L475.4 650.3L476.7 653.4L480.4 654.6L484.0 652.2L487.7 650.3L489.0 646.6L492.7 647.9L490.2 650.3L487.7 653.4L484.0 655.3L481.0 656.5L479.1 659.6L477.9 662.0L481.6 663.3L484.0 664.5L487.7 665.7L492.7 667.0L495.1 670.7L497.6 673.7L501.3 673.1L500.1 675.6L496.4 675.6L492.7 671.9L490.2 669.4L485.3 668.2L482.8 667.0L479.1 665.7L476.7 662.0L475.4 657.1L473.0 655.3L470.5 656.5L468.7 654.6ZM491.2 668.6L494.9 671.1L495.6 674.2L498.6 674.8L501.7 672.9L499.2 671.7L496.2 668.0L493.7 667.4ZM573.7 679.1L579.9 679.1L580.5 680.9L574.9 681.6Z" fill="none" stroke="#000" stroke-width="1.2" stroke-linejoin="round"/><path d="M222.4 656.9L226.1 656.1L229.8 655.4L227.5 658.3L226.1 659.8M234.9 658.3L239.4 657.6L242.3 656.1L244.5 655.4M251.2 655.4L255.6 654.6L260.1 656.9L266.0 657.6L269.7 657.6M273.4 658.3L279.3 658.3M243.1 672.4L246.0 676.1L248.2 682.0L248.5 687.9L246.8 693.8L245.3 698.2L242.3 702.7L238.6 706.4L236.4 708.6M239.4 689.4L241.6 687.2L244.5 686.4L243.8 690.8M235.7 694.5L237.2 692.3M227.5 718.9L231.2 716.0M217.9 724.8L222.4 723.4L223.1 721.6M284.9 656.3L288.6 657.0L293.6 655.7L298.5 654.5L300.9 653.9L302.2 655.1L300.3 657.0L300.9 658.2M264.0 657.6L268.9 658.2M272.6 658.8L278.8 659.2M502.9 687.7L501.1 689.6L500.1 693.3L500.8 698.2L502.3 701.9L504.2 705.0L505.4 706.8L507.9 705.6L509.7 705.0M525.1 709.9L527.0 711.7L528.2 714.2L531.9 713.0L535.6 711.1L539.3 708.7L543.0 706.8L547.9 704.3L551.6 701.3L554.7 698.8M557.1 697.0L560.2 695.1L563.3 692.6M556.5 697.0L560.2 695.1L563.9 692.6M574.3 684.6L578.6 685.9L581.1 686.5M21.6 728.2L22.4 728.8M793.4 556.2L795.3 555.6L797.1 558.0L799.6 558.6L798.3 560.5M783.6 569.7L786.0 569.1L788.5 570.3L790.9 572.2L793.4 575.9L795.9 578.3L797.1 581.4L795.3 583.3L792.8 582.6L790.9 580.2L789.1 581.4L790.9 583.3M797.1 569.7L795.9 573.4L797.7 575.9M780.5 589.4L783.6 588.8L787.3 590.0L790.9 589.4L794.6 590.7L797.1 589.4M790.9 598.0L793.4 595.6L795.9 594.3L797.1 596.8L794.6 599.3L792.2 600.5M784.8 600.5L788.5 601.7L792.2 603.0L795.9 604.2M781.1 611.6L784.8 612.8L788.5 614.0L792.2 612.8L794.6 614.0L793.4 617.7L790.9 620.2L794.6 619.0L796.5 615.3M784.8 627.6L788.5 628.8L790.9 631.3L794.6 630.1L796.5 627.6L793.4 626.4L790.9 625.1M775.4 639.5L778.8 639.9L782.3 638.7L785.7 639.1L789.2 640.4L792.6 637.8L796.1 636.9L798.7 638.7M785.7 626.6L789.2 629.2L792.6 627.4L794.3 630.9L792.6 633.5L796.1 634.3M780.6 642.1L784.0 643.8L787.4 643.0L790.9 644.7L794.3 643.8L797.8 646.4L798.7 651.6M782.3 646.4L784.0 649.0L785.7 650.7M772.8 667.1L775.4 664.5L778.0 663.2" fill="none" stroke="#000" stroke-width="1.3" stroke-linejoin="round"/><path d="M94.0 740.5L97.7 743.0L100.2 746.7L97.7 749.1L94.0 749.7ZM229.0 749.0L232.7 747.7L235.1 750.2L232.7 752.1L229.0 751.7Z" fill="#000"/><path d="M778.8 649.0L778.4 651.6L779.7 654.2L781.8 656.8L781.4 658.5L779.7 661.1L778.8 663.7L779.3 667.1L780.6 669.7L778.8 672.3L779.3 674.9L781.4 676.6L784.0 678.3L785.7 680.0L784.9 682.6L784.4 686.1L785.7 689.5L786.6 694.0M778.1 670.0L778.9 675.0L783.0 677.4L787.2 679.1L785.5 683.2L784.7 688.2L787.2 693.1L789.6 698.1L788.8 702.2L784.7 703.8L782.2 705.5L783.9 709.6L783.0 712.9L778.9 714.6L778.1 717.9L778.6 722.8" fill="none" stroke="#000" stroke-width="3.6"/><path d="M778.8 649.0L778.4 651.6L779.7 654.2L781.8 656.8L781.4 658.5L779.7 661.1L778.8 663.7L779.3 667.1L780.6 669.7L778.8 672.3L779.3 674.9L781.4 676.6L784.0 678.3L785.7 680.0L784.9 682.6L784.4 686.1L785.7 689.5L786.6 694.0M778.1 670.0L778.9 675.0L783.0 677.4L787.2 679.1L785.5 683.2L784.7 688.2L787.2 693.1L789.6 698.1L788.8 702.2L784.7 703.8L782.2 705.5L783.9 709.6L783.0 712.9L778.9 714.6L778.1 717.9L778.6 722.8" fill="none" stroke="#004466" stroke-width="1.8"/><circle cx="401" cy="401" r="159.5" fill="none" stroke="#c4c4c4" stroke-width="0.99" stroke-dasharray="739.63 22.00 1002.17"/><circle cx="401" cy="401" r="279.5" fill="none" stroke="#c4c4c4" stroke-width="0.99" stroke-dasharray="1305.11 22.00 1756.15"/><circle cx="401" cy="401" r="399.5" fill="none" stroke="#c4c4c4" stroke-width="0.99" stroke-dasharray="1870.60 22.00 2510.13"/><circle cx="401" cy="401" r="519.5" fill="none" stroke="#c4c4c4" stroke-width="0.99"/><text x="400.2" y="5" text-anchor="middle" font-family="DejaVu Sans,Liberation Sans,sans-serif" font-size="9.5" fill="#ffff8c" letter-spacing="1.2" shape-rendering="auto">313</text><text x="400.2" y="125" text-anchor="middle" font-family="DejaVu Sans,Liberation Sans,sans-serif" font-size="9.5" fill="#ffff8c" letter-spacing="1.2" shape-rendering="auto">219</text><text x="400.2" y="245" text-anchor="middle" font-family="DejaVu Sans,Liberation Sans,sans-serif" font-size="9.5" fill="#ffff8c" letter-spacing="1.2" shape-rendering="auto">125</text><text x="400.2" y="365" text-anchor="middle" font-family="DejaVu Sans,Liberation Sans,sans-serif" font-size="9.5" fill="#ffff8c" letter-spacing="1.2" shape-rendering="auto">31</text><circle cx="401" cy="401" r="39.5" fill="none" stroke="#ff0000" stroke-width="1"/></svg></div>
<div id="copy" style="position:absolute;left:685px;top:792px;width:121px;height:14px;background:#000"></div><div id="legend" style="position:absolute;left:9px;top:759px;width:244px;height:44px;box-sizing:border-box;border:1px solid #8c8786;background:#000"></div><svg style="position:absolute;left:9px;top:759px" width="244" height="44" viewBox="9 759 244 44" shape-rendering="crispEdges"><g stroke="#00ffff" fill="none" stroke-width="1"><circle cx="60.5" cy="780.5" r="4" shape-rendering="auto"/><path d="M58 780.5h5"/><path d="M82 780.5h7"/><circle cx="110.5" cy="780.5" r="4" shape-rendering="auto"/><path d="M108 780.5h5M110.5 778.0v5"/><path d="M132 780.5h7M135.5 777.0v7"/></g><g stroke="#ffff00" fill="none" stroke-width="1"><circle cx="60.5" cy="793.5" r="4" shape-rendering="auto"/><path d="M58 793.5h5"/><path d="M82 793.5h7"/><circle cx="110.5" cy="793.5" r="4" shape-rendering="auto"/><path d="M108 793.5h5M110.5 791.0v5"/><path d="M132 793.5h7M135.5 790.0v7"/></g></svg>
<div class="box" style="left:812px;top:8px;width:321px;height:320px"></div>
<div class="box" style="left:812px;top:333px;width:321px;height:115px"></div>
<div class="box" style="left:812px;top:453px;width:321px;height:350px"></div>
<div class="btn" style="left:819px;top:16px;width:58px;height:18px;background:#500000"></div>
<div class="btn" style="left:883px;top:16px;width:58px;height:18px;background:#333333"></div>
<div class="btn" style="left:994px;top:16px;width:128px;height:18px;background:#333333"></div>
<div class="btn" style="left:821px;top:64px;width:82px;height:16px;background:#606060"></div>
<div class="btn" style="left:931px;top:64px;width:82px;height:16px;background:#606060"></div>
<div class="btn" style="left:1041px;top:64px;width:82px;height:16px;background:#606060"></div>
<div class="hr" style="left:821px;top:217px;width:303px"></div>
<div class="hr" style="left:821px;top:358px;width:302px"></div>
<div class="bar" style="left:925px;top:227px"><i style="width:18px;background:#ff0000"></i></div>
<div class="bar" style="left:1028px;top:227px"></div>
<div class="bar" style="left:925px;top:281px"><i style="width:18px;background:#e85aa8"></i></div>
<div class="bar" style="left:1028px;top:281px"><i style="width:12px;background:#00ff00"></i></div>
<div style="position:absolute;left:1016px;top:232px;width:6px;height:2px;background:#c8c8c8"></div>
<div style="position:absolute;left:1016px;top:286px;width:6px;height:2px;background:#c8c8c8"></div>
<svg id="graph" width="326" height="359" viewBox="812 453 326 359" shape-rendering="crispEdges"><path d="M1088.5 542V778M822 777.5H1089" stroke="#d0d0d0" fill="none" stroke-width="1"/><path d="M1084 542.5H1088M1086 581.5H1088M1084 621.5H1088M1086 660.5H1088M1084 699.5H1088M1086 738.5H1088M822.5 775V777M866.5 775V777M911.5 775V777M955.5 775V777M999.5 775V777M1044.5 775V777" stroke="#d0d0d0" fill="none" stroke-width="1"/></svg>
<span class="t" style="left:824px;top:19px;font-size:12px;color:#cfc9c9;font-weight:bold;transform:scaleX(1.008);">STRIKE</span>
<span class="t" style="left:891px;top:19px;font-size:12px;color:#b4baba;font-weight:bold;transform:scaleX(1.049);">NOISE</span>
<span class="t" style="left:999px;top:19px;font-size:12px;color:#ffffff;font-weight:bold;">Bng 226°</span>
<span class="t" style="left:1076px;top:19px;font-size:12px;color:#00ff00;font-weight:bold;transform:scaleX(1.015);">378mi</span>
<span class="t" style="left:829px;top:66px;font-size:11px;color:#e8e8e8;transform:scaleX(1.061);">Strikes/min</span>
<span class="t" style="left:944px;top:66px;font-size:11px;color:#e8e8e8;transform:scaleX(1.059);">Close/min</span>
<span class="t" style="left:1050px;top:66px;font-size:11px;color:#e8e8e8;transform:scaleX(1.026);">Noises/min</span>
<span class="t" style="left:882px;top:85px;font-size:29px;color:#ffffff;font-weight:bold;">0</span>
<span class="t" style="left:992px;top:85px;font-size:29px;color:#ffffff;font-weight:bold;">0</span>
<span class="t" style="left:1102px;top:85px;font-size:29px;color:#c0c0c0;font-weight:bold;">0</span>
<span class="t" style="left:827px;top:132px;font-size:12px;color:#ffffff;transform:scaleX(1.027);">Total Strikes</span>
<span class="t" style="left:946px;top:132px;font-size:12px;color:#ffffff;transform:scaleX(1.036);">Total Close</span>
<span class="t" style="left:1049px;top:132px;font-size:12px;color:#d0d0d0;transform:scaleX(1.025);">Total Noises</span>
<span class="t" style="left:894px;top:150px;font-size:12px;color:#ffffff;">8</span>
<span class="t" style="left:1005px;top:150px;font-size:12px;color:#ffffff;">0</span>
<span class="t" style="left:1108px;top:150px;font-size:12px;color:#ffffff;transform:scaleX(0.947);">32</span>
<span class="t" style="left:821px;top:204px;font-size:12px;color:#d0d0d0;transform:scaleX(1.034);">Lightning type distribution</span>
<span class="t" style="left:821px;top:226px;font-size:12px;color:#ffffff;font-weight:bold;transform:scaleX(0.921);">Cloud-ground</span>
<span class="t" style="left:912px;top:226px;font-size:12px;color:#d8d8d8;">+</span>
<span class="t" style="left:979px;top:226px;font-size:12px;color:#ffffff;font-weight:bold;">38%</span>
<span class="t" style="left:1082px;top:226px;font-size:12px;color:#ffffff;font-weight:bold;transform:scaleX(1.029);">0%</span>
<span class="t" style="left:821px;top:250px;font-size:12px;color:#c4c4c4;font-weight:bold;transform:scaleX(0.930);">Count</span>
<span class="t" style="left:925px;top:250px;font-size:12px;color:#ffffff;font-weight:bold;">3</span>
<span class="t" style="left:1028px;top:250px;font-size:12px;color:#ffffff;font-weight:bold;">0</span>
<span class="t" style="left:821px;top:280px;font-size:12px;color:#ffffff;font-weight:bold;transform:scaleX(0.913);">Intracloud</span>
<span class="t" style="left:912px;top:280px;font-size:12px;color:#d8d8d8;">+</span>
<span class="t" style="left:979px;top:280px;font-size:12px;color:#ffffff;font-weight:bold;">38%</span>
<span class="t" style="left:1082px;top:280px;font-size:12px;color:#ffffff;font-weight:bold;transform:scaleX(1.014);">25%</span>
<span class="t" style="left:821px;top:304px;font-size:12px;color:#c4c4c4;font-weight:bold;transform:scaleX(0.930);">Count</span>
<span class="t" style="left:925px;top:304px;font-size:12px;color:#ffffff;font-weight:bold;">3</span>
<span class="t" style="left:1028px;top:304px;font-size:12px;color:#ffffff;font-weight:bold;">2</span>
<span class="t" style="left:821px;top:339px;font-size:15px;color:#00ff00;font-weight:bold;transform:scaleX(1.101);">2/3/2026 5:54:56 AM</span>
<span class="t" style="left:821px;top:377px;font-size:12px;color:#ffffff;transform:scaleX(1.021);">Squelch</span>
<span class="t" style="left:909px;top:377px;font-size:12px;color:#ffffff;">0</span>
<span class="t" style="left:981px;top:377px;font-size:12px;color:#ffffff;transform:scaleX(1.024);">Upload</span>
<span class="t" style="left:1061px;top:377px;font-size:12px;color:#c0c0c0;transform:scaleX(1.035);">Disabled</span>
<span class="t" style="left:821px;top:397px;font-size:12px;color:#ffffff;transform:scaleX(1.052);">Persistence</span>
<span class="t" style="left:909px;top:397px;font-size:12px;color:#ffffff;transform:scaleX(0.981);">90 min</span>
<span class="t" style="left:981px;top:397px;font-size:12px;color:#ffffff;transform:scaleX(1.054);">Capture</span>
<span class="t" style="left:1061px;top:397px;font-size:12px;color:#00ff00;transform:scaleX(0.963);">Active</span>
<span class="t" style="left:821px;top:417px;font-size:12px;color:#ffffff;transform:scaleX(1.042);">Range</span>
<span class="t" style="left:909px;top:417px;font-size:12px;color:#ffffff;transform:scaleX(1.005);">313 mi</span>
<span class="t" style="left:981px;top:417px;font-size:12px;color:#ffffff;">Receiver</span>
<span class="t" style="left:1061px;top:417px;font-size:12px;color:#00ff00;transform:scaleX(1.054);">Enabled</span>
<span class="t" style="left:821px;top:464px;font-size:12px;color:#c8c8c8;transform:scaleX(1.009);">Uptime</span>
<span class="t" style="left:910px;top:464px;font-size:12px;color:#ffffff;transform:scaleX(1.029);">521:40</span>
<span class="t" style="left:981px;top:464px;font-size:12px;color:#c8c8c8;transform:scaleX(1.044);">Peak time</span>
<span class="t" style="left:1061px;top:464px;font-size:12px;color:#c8c8c8;transform:scaleX(1.009);">Plot</span>
<span class="t" style="left:820px;top:487px;font-size:12px;color:#c8c8c8;transform:scaleX(1.070);">Peak rate</span>
<span class="t" style="left:909px;top:487px;font-size:12px;color:#ffffff;transform:scaleX(1.024);">1/min</span>
<span class="t" style="left:981px;top:487px;font-size:12px;color:#ffffff;transform:scaleX(1.037);">3:54 AM</span>
<span class="t" style="left:1061px;top:487px;font-size:12px;color:#ffffff;transform:scaleX(1.030);">Strike</span>
<span class="t" style="left:822px;top:517px;font-size:12px;color:#c8c8c8;transform:scaleX(1.052);">Trend graph</span>
<span class="t" style="left:908px;top:517px;font-size:12px;color:#ffffff;transform:scaleX(0.991);">60 min</span>
<span class="t" style="left:1092px;top:536px;font-size:11px;color:#d0d0d0;transform:scaleX(0.929);">30</span>
<span class="t" style="left:1092px;top:614px;font-size:11px;color:#d0d0d0;transform:scaleX(0.929);">20</span>
<span class="t" style="left:1092px;top:693px;font-size:11px;color:#d0d0d0;">10</span>
<span class="t" style="left:820px;top:783px;font-size:11px;color:#d0d0d0;transform:scaleX(0.972);">60</span>
<span class="t" style="left:864px;top:783px;font-size:11px;color:#d0d0d0;transform:scaleX(0.972);">50</span>
<span class="t" style="left:909px;top:783px;font-size:11px;color:#d0d0d0;transform:scaleX(0.972);">40</span>
<span class="t" style="left:953px;top:783px;font-size:11px;color:#d0d0d0;transform:scaleX(0.972);">30</span>
<span class="t" style="left:997px;top:783px;font-size:11px;color:#d0d0d0;transform:scaleX(0.972);">20</span>
<span class="t" style="left:1042px;top:783px;font-size:11px;color:#d0d0d0;transform:scaleX(1.047);">10</span>
<span class="t" style="left:1087px;top:783px;font-size:11px;color:#d0d0d0;">0</span>
<span class="t" style="left:1100px;top:783px;font-size:11px;color:#d0d0d0;transform:scaleX(0.857);">min</span>
<span class="t" style="left:13px;top:762px;font-size:9.5px;color:#e8e8e8;transform:scaleX(0.995);font-family:'Liberation Sans',sans-serif;">Symbols</span>
<span class="t" style="left:53px;top:762px;font-size:9.5px;color:#ffffff;transform:scaleX(1.024);font-family:'Liberation Sans',sans-serif;">-CG</span>
<span class="t" style="left:78px;top:762px;font-size:9.5px;color:#ffffff;transform:scaleX(1.154);font-family:'Liberation Sans',sans-serif;">-IC</span>
<span class="t" style="left:99px;top:762px;font-size:9.5px;color:#ffffff;transform:scaleX(1.040);font-family:'Liberation Sans',sans-serif;">+CG</span>
<span class="t" style="left:124px;top:762px;font-size:9.5px;color:#ffffff;transform:scaleX(1.200);font-family:'Liberation Sans',sans-serif;">+IC</span>
<span class="t" style="left:153px;top:762px;font-size:9.5px;color:#e8e8e8;transform:scaleX(0.960);font-family:'Liberation Sans',sans-serif;">Strike age color codes</span>
<span class="t" style="left:13px;top:775px;font-size:9.5px;color:#e8e8e8;transform:scaleX(0.929);font-family:'Liberation Sans',sans-serif;">Recent</span>
<span class="t" style="left:13px;top:788px;font-size:9.5px;color:#e8e8e8;transform:scaleX(1.014);font-family:'Liberation Sans',sans-serif;">Old</span>
<span class="t" style="left:154px;top:775px;font-size:9.5px;color:#ffff00;transform:scaleX(0.975);font-family:'Liberation Sans',sans-serif;">15+</span>
<span class="t" style="left:188px;top:775px;font-size:9.5px;color:#f0b000;font-family:'Liberation Sans',sans-serif;">30+</span>
<span class="t" style="left:223px;top:775px;font-size:9.5px;color:#e89800;font-family:'Liberation Sans',sans-serif;">45+</span>
<span class="t" style="left:154px;top:788px;font-size:9.5px;color:#e88000;transform:scaleX(0.975);font-family:'Liberation Sans',sans-serif;">60+</span>
<span class="t" style="left:188px;top:788px;font-size:9.5px;color:#e86000;font-family:'Liberation Sans',sans-serif;">75+</span>
<span class="t" style="left:223px;top:788px;font-size:9.5px;color:#f03800;font-family:'Liberation Sans',sans-serif;">90+</span>
<span class="t" style="left:689px;top:793px;font-size:9.5px;color:#ffffff;font-family:'Liberation Sans',sans-serif;">©2005 Astrogenic Systems</span>
</body></html>
